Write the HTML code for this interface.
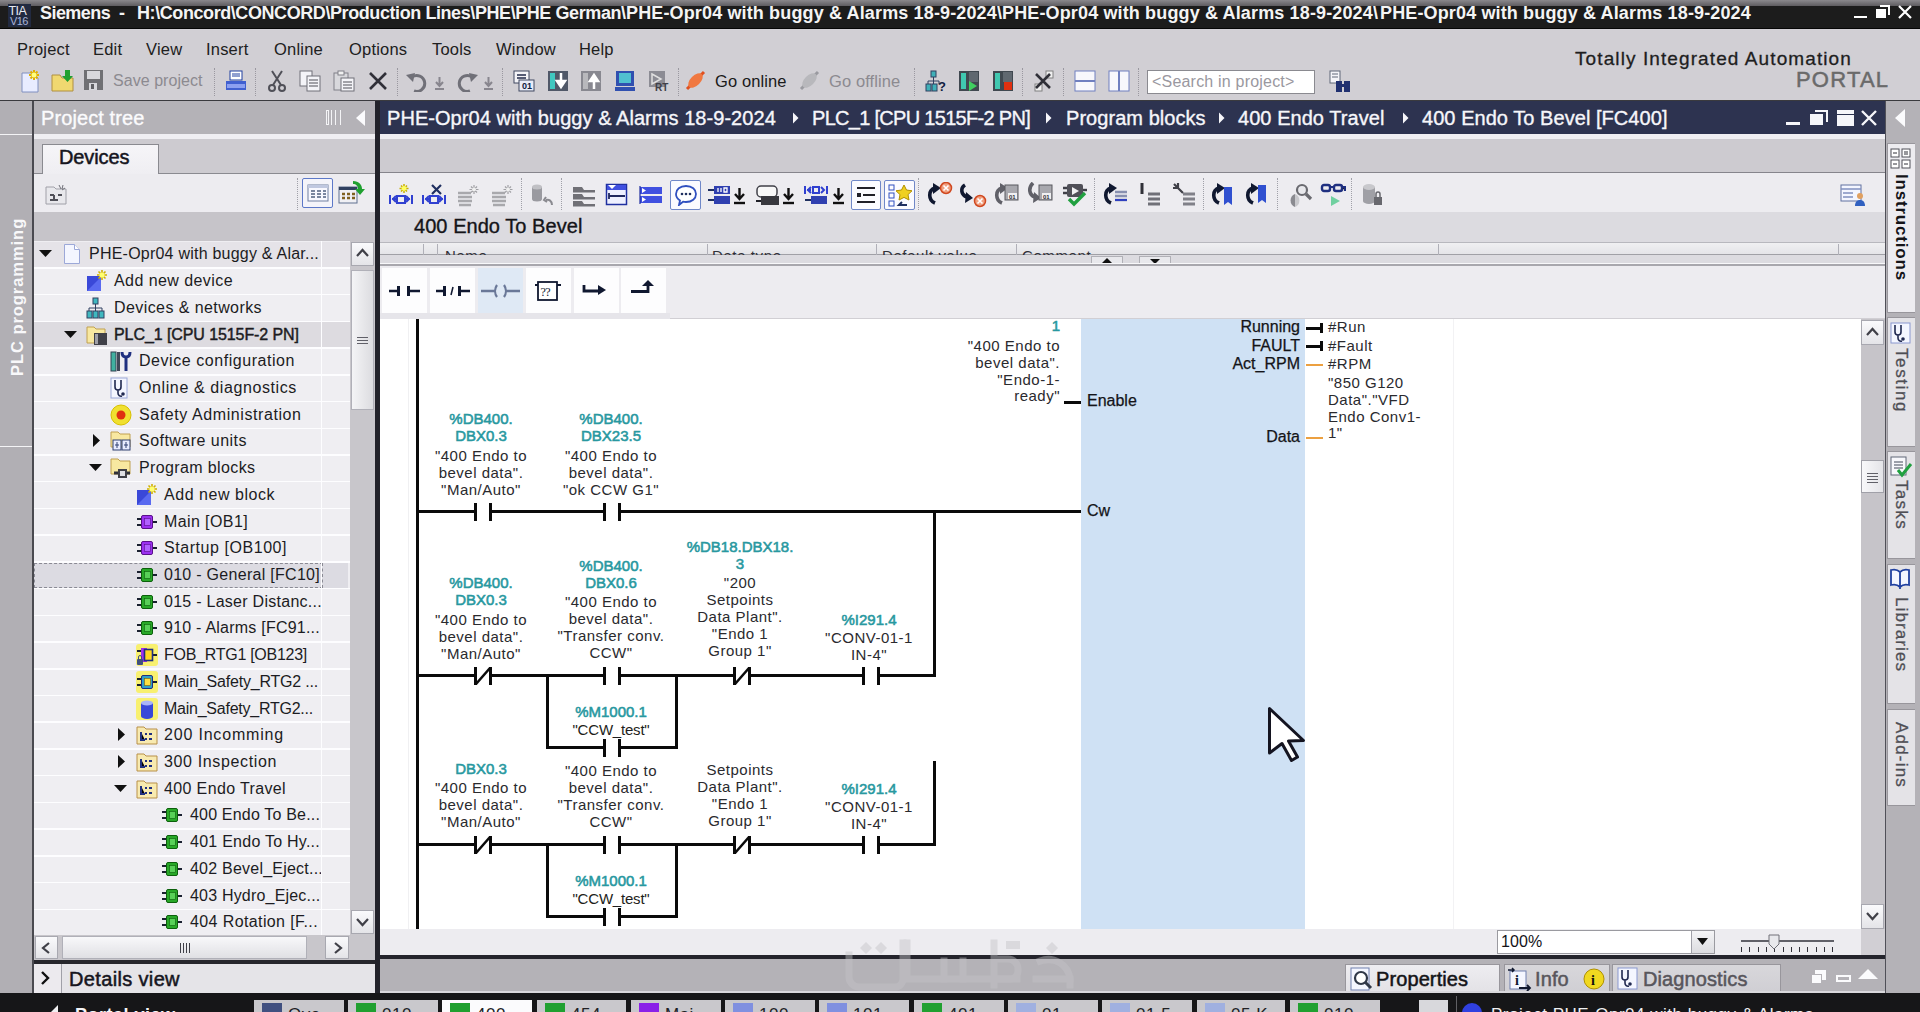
<!DOCTYPE html><html><head><meta charset='utf-8'><style>
*{margin:0;padding:0;box-sizing:border-box}
html,body{width:1920px;height:1012px;overflow:hidden;background:#d1cfd4;font-family:"Liberation Sans",sans-serif}
div,svg{position:absolute}
.t{white-space:pre;color:#1a1a1a}
</style></head><body>
<div style="left:0px;top:0px;width:1920px;height:6px;background:linear-gradient(#8a888c,#5e5c60)"></div>
<div style="left:0px;top:6px;width:1920px;height:22px;background:#1c1c1c"></div>
<div style="left:0px;top:28px;width:1920px;height:1px;background:#050505"></div>
<div style="left:8px;top:4px;width:23px;height:23px;background:#222a40"></div>
<div class="t" style="left:8.5px;top:4.5px;line-height:13px;font-size:12.5px;color:#e8eaf2;letter-spacing:-0.6px;">TIA</div>
<div class="t" style="left:10px;top:16.0px;line-height:11px;font-size:11px;color:#a8b4d8;letter-spacing:-0.6px;">V16</div>
<div class="t" style="left:40px;top:3.0px;line-height:20px;font-size:18px;color:#f4f4f4;font-weight:bold;letter-spacing:-0.55px">Siemens</div>
<div class="t" style="left:119px;top:3.0px;line-height:20px;font-size:18px;color:#f4f4f4;font-weight:bold;">-</div>
<div class="t" style="left:137px;top:3.0px;line-height:20px;font-size:18px;color:#f4f4f4;font-weight:bold;letter-spacing:-0.42px">H:\Concord\CONCORD\Production Lines\PHE\PHE German\</div>
<div class="t" style="left:626px;top:3.0px;line-height:20px;font-size:18px;color:#f4f4f4;font-weight:bold;letter-spacing:0.14px">PHE-Opr04 with buggy &amp; Alarms 18-9-2024\</div>
<div class="t" style="left:1002px;top:3.0px;line-height:20px;font-size:18px;color:#f4f4f4;font-weight:bold;letter-spacing:0.14px">PHE-Opr04 with buggy &amp; Alarms 18-9-2024\</div>
<div class="t" style="left:1380px;top:3.0px;line-height:20px;font-size:18px;color:#f4f4f4;font-weight:bold;letter-spacing:0.14px">PHE-Opr04 with buggy &amp; Alarms 18-9-2024</div>
<div style="left:1854px;top:16px;width:13px;height:2px;background:#fff"></div>
<div style="left:1880px;top:5px;width:10px;height:10px;border:2px solid #fff;border-left:none;border-bottom:none"></div>
<div style="left:1876px;top:9px;width:10px;height:9px;background:#fff"></div>
<svg style="left:1897px;top:4px;" width="16" height="16" viewBox="0 0 16 16"><path d="M2 2L14 14M14 2L2 14" stroke="#fff" stroke-width="2.2"/></svg>
<div class="t" style="left:17px;top:39.0px;line-height:20px;font-size:16.5px;color:#202020;letter-spacing:0.2px">Project</div>
<div class="t" style="left:93px;top:39.0px;line-height:20px;font-size:16.5px;color:#202020;letter-spacing:0.2px">Edit</div>
<div class="t" style="left:146px;top:39.0px;line-height:20px;font-size:16.5px;color:#202020;letter-spacing:0.2px">View</div>
<div class="t" style="left:206px;top:39.0px;line-height:20px;font-size:16.5px;color:#202020;letter-spacing:0.2px">Insert</div>
<div class="t" style="left:274px;top:39.0px;line-height:20px;font-size:16.5px;color:#202020;letter-spacing:0.2px">Online</div>
<div class="t" style="left:349px;top:39.0px;line-height:20px;font-size:16.5px;color:#202020;letter-spacing:0.2px">Options</div>
<div class="t" style="left:432px;top:39.0px;line-height:20px;font-size:16.5px;color:#202020;letter-spacing:0.2px">Tools</div>
<div class="t" style="left:496px;top:39.0px;line-height:20px;font-size:16.5px;color:#202020;letter-spacing:0.2px">Window</div>
<div class="t" style="left:579px;top:39.0px;line-height:20px;font-size:16.5px;color:#202020;letter-spacing:0.2px">Help</div>
<div class="t" style="left:1575px;top:49.0px;line-height:20px;font-size:19px;color:#1e1e1e;-webkit-text-stroke:0.3px #1e1e1e;letter-spacing:1.1px">Totally Integrated Automation</div>
<div class="t" style="left:1796px;top:70.0px;line-height:20px;font-size:22px;color:#6a6a6a;-webkit-text-stroke:0.5px #6a6a6a;letter-spacing:1.2px">PORTAL</div>
<div style="left:0px;top:100px;width:1920px;height:1px;background:#3a3a3e"></div>
<svg style="left:20px;top:69px;" width="22" height="24" viewBox="0 0 22 24"><path d="M2 4h11l5 5v14H2z" fill="#e8ecff" stroke="#8090c0"/><g stroke="#e0b000" stroke-width="2"><path d="M14 1v10M9 6h10M10.5 2.5l7 7M17.5 2.5l-7 7"/></g><circle cx="14" cy="6" r="2.5" fill="#ffff80"/></svg>
<svg style="left:51px;top:69px;" width="24" height="24" viewBox="0 0 24 24"><path d="M1 6h8l2 3h11v13H1z" fill="#f0d870" stroke="#b09040"/><path d="M14 1h5v6h3l-5.5 6-5.5-6h3z" fill="#20a030"/></svg>
<svg style="left:83px;top:69px;" width="21" height="22" viewBox="0 0 21 22"><rect x="1" y="1" width="19" height="20" fill="#707074"/><rect x="4" y="2" width="13" height="8" fill="#d8d8dc"/><rect x="6" y="14" width="8" height="7" fill="#d8d8dc"/><rect x="8" y="15" width="3" height="5" fill="#606064"/></svg>
<div class="t" style="left:113px;top:71.0px;line-height:20px;font-size:16px;color:#8c8a90;letter-spacing:0.05px">Save project</div>
<div style="left:214px;top:68px;width:1px;height:28px;border-left:1px dotted #9a98a0"></div>
<svg style="left:225px;top:70px;" width="22" height="22" viewBox="0 0 22 22"><rect x="5" y="1" width="12" height="9" fill="#fff" stroke="#2040a0"/><path d="M7 4h8M7 6h8" stroke="#2040a0"/><path d="M1 11h20v9H1z" fill="#4060d0"/><rect x="2" y="14" width="18" height="4" fill="#8ca0f0"/></svg>
<div style="left:255px;top:68px;width:1px;height:28px;border-left:1px dotted #9a98a0"></div>
<svg style="left:268px;top:70px;" width="18" height="22" viewBox="0 0 18 22"><path d="M4 1l9 14M14 1L5 15" stroke="#505058" stroke-width="2"/><circle cx="4" cy="18" r="3" fill="none" stroke="#505058" stroke-width="2"/><circle cx="14" cy="18" r="3" fill="none" stroke="#505058" stroke-width="2"/></svg>
<svg style="left:299px;top:70px;" width="22" height="22" viewBox="0 0 22 22"><rect x="1" y="1" width="12" height="15" fill="#f4f4f8" stroke="#707078"/><rect x="8" y="6" width="13" height="15" fill="#f4f4f8" stroke="#707078"/><path d="M10 10h9M10 13h9M10 16h9" stroke="#505058"/></svg>
<svg style="left:333px;top:70px;" width="22" height="22" viewBox="0 0 22 22"><rect x="1" y="3" width="14" height="17" fill="#d8d8dc" stroke="#808088"/><rect x="5" y="1" width="6" height="4" fill="#f0f0f0" stroke="#808088"/><rect x="8" y="8" width="13" height="13" fill="#f4f4f8" stroke="#707078"/><path d="M10 12h9M10 15h9M10 18h9" stroke="#505058"/></svg>
<svg style="left:368px;top:72px;" width="20" height="18" viewBox="0 0 20 18"><path d="M2 1l16 16M18 1L2 17" stroke="#303038" stroke-width="2.6"/></svg>
<div style="left:397px;top:68px;width:1px;height:28px;border-left:1px dotted #9a98a0"></div>
<svg style="left:405px;top:71px;" width="24" height="21" viewBox="0 0 24 21"><path d="M7 6a8 8 0 1 1 2 14" fill="none" stroke="#707078" stroke-width="3"/><path d="M1 4l9-2-2 9z" fill="#707078"/></svg>
<svg style="left:434px;top:76px;" width="11" height="15" viewBox="0 0 11 15"><path d="M5.5 1v8M2 6l3.5 4 3.5-4" stroke="#88868e" stroke-width="2" fill="none"/><path d="M1 13h9" stroke="#88868e" stroke-width="2"/></svg>
<svg style="left:455px;top:71px;" width="24" height="21" viewBox="0 0 24 21"><path d="M17 6a8 8 0 1 0 -2 14" fill="none" stroke="#707078" stroke-width="3"/><path d="M23 4l-9-2 2 9z" fill="#707078"/></svg>
<svg style="left:483px;top:76px;" width="11" height="15" viewBox="0 0 11 15"><path d="M5.5 1v8M2 6l3.5 4 3.5-4" stroke="#88868e" stroke-width="2" fill="none"/><path d="M1 13h9" stroke="#88868e" stroke-width="2"/></svg>
<div style="left:502px;top:68px;width:1px;height:28px;border-left:1px dotted #9a98a0"></div>
<svg style="left:513px;top:70px;" width="22" height="22" viewBox="0 0 22 22"><rect x="1" y="1" width="15" height="12" fill="#f4f4f8" stroke="#404860"/><path d="M4 5h9M4 8h9" stroke="#202848" stroke-width="1.5"/><rect x="6" y="10" width="15" height="11" fill="#e8ecf8" stroke="#404860"/><text x="9" y="19" font-size="9" font-weight="bold" fill="#102040" font-family="Liberation Sans">01</text></svg>
<svg style="left:547px;top:70px;" width="22" height="22" viewBox="0 0 22 22"><rect x="1" y="1" width="20" height="20" fill="#505868"/><rect x="3" y="3" width="5" height="16" fill="#40c8c0"/><path d="M14 3v10M10 11l4 6 4-6z" stroke="#fff" stroke-width="2.5" fill="#fff"/></svg>
<svg style="left:580px;top:70px;" width="22" height="22" viewBox="0 0 22 22"><rect x="1" y="1" width="20" height="20" fill="#888890"/><rect x="3" y="3" width="5" height="16" fill="#b8b8bc"/><path d="M14 19V9M10 11l4-6 4 6z" stroke="#fff" stroke-width="2.5" fill="#fff"/></svg>
<svg style="left:614px;top:70px;" width="22" height="22" viewBox="0 0 22 22"><rect x="2" y="1" width="18" height="15" fill="#3050b0"/><rect x="5" y="3" width="12" height="10" fill="#50c0d0"/><rect x="1" y="17" width="20" height="4" fill="#3050b0"/></svg>
<svg style="left:648px;top:70px;" width="22" height="22" viewBox="0 0 22 22"><rect x="1" y="1" width="16" height="16" fill="#8c8c94"/><path d="M4 4l9 5-9 5z" fill="none" stroke="#e0e0e0" stroke-width="1.5"/><text x="7" y="21" font-size="10" font-weight="bold" fill="#404048" font-family="Liberation Sans">RT</text></svg>
<div style="left:678px;top:68px;width:1px;height:28px;border-left:1px dotted #9a98a0"></div>
<svg style="left:684px;top:69px;" width="23" height="23" viewBox="0 0 23 23"><path d="M3 20l5-5M15 8l5-5" stroke="#e05020" stroke-width="3"/><ellipse cx="11.5" cy="11.5" rx="9" ry="5" transform="rotate(-45 11.5 11.5)" fill="#f07840"/></svg>
<div class="t" style="left:715px;top:71.0px;line-height:20px;font-size:16.5px;color:#1a1a1a;letter-spacing:0.1px">Go online</div>
<svg style="left:798px;top:69px;" width="23" height="23" viewBox="0 0 23 23"><path d="M3 20l5-5M15 8l5-5" stroke="#9a9aa0" stroke-width="3"/><ellipse cx="11.5" cy="11.5" rx="9" ry="5" transform="rotate(-45 11.5 11.5)" fill="#b8b8bc"/></svg>
<div class="t" style="left:829px;top:71.0px;line-height:20px;font-size:16.5px;color:#8c8a90;letter-spacing:0.1px">Go offline</div>
<div style="left:914px;top:68px;width:1px;height:28px;border-left:1px dotted #9a98a0"></div>
<svg style="left:925px;top:70px;" width="22" height="22" viewBox="0 0 22 22"><rect x="6" y="1" width="5" height="6" fill="#40b0b8" stroke="#304060"/><path d="M8.5 7v4M3 11h11M3 11v3M8.5 11v3M14 11v3" stroke="#304060"/><rect x="1" y="14" width="5" height="7" fill="#40b0b8" stroke="#304060"/><rect x="7" y="14" width="5" height="7" fill="#40b0b8" stroke="#304060"/><text x="13" y="21" font-size="13" font-weight="bold" fill="#102040" font-family="Liberation Sans">?</text></svg>
<svg style="left:958px;top:70px;" width="22" height="22" viewBox="0 0 22 22"><rect x="1" y="1" width="20" height="20" fill="#404850"/><rect x="3" y="3" width="5" height="16" fill="#40c8b0"/><rect x="11" y="2" width="9" height="10" fill="#606870"/><path d="M11 11l8 5-8 5z" fill="#40d060"/></svg>
<svg style="left:992px;top:70px;" width="22" height="22" viewBox="0 0 22 22"><rect x="1" y="1" width="20" height="20" fill="#404850"/><rect x="3" y="3" width="5" height="16" fill="#40c8b0"/><rect x="11" y="2" width="9" height="10" fill="#606870"/><rect x="12" y="12" width="8" height="8" fill="#e03010"/></svg>
<div style="left:1022px;top:68px;width:1px;height:28px;border-left:1px dotted #9a98a0"></div>
<svg style="left:1033px;top:70px;" width="22" height="22" viewBox="0 0 22 22"><rect x="13" y="1" width="7" height="7" fill="#f0f0f0" stroke="#808080"/><rect x="2" y="14" width="7" height="7" fill="#f0f0f0" stroke="#808080"/><path d="M3 4l14 14M17 4L3 18" stroke="#303038" stroke-width="2.6"/></svg>
<div style="left:1063px;top:68px;width:1px;height:28px;border-left:1px dotted #9a98a0"></div>
<svg style="left:1074px;top:70px;" width="22" height="22" viewBox="0 0 22 22"><rect x="1" y="1" width="20" height="20" fill="#f8f8fc" stroke="#7080c0"/><path d="M1 11h20" stroke="#7080c0" stroke-width="2"/></svg>
<svg style="left:1108px;top:70px;" width="22" height="22" viewBox="0 0 22 22"><rect x="1" y="1" width="20" height="20" fill="#f8f8fc" stroke="#7080c0"/><path d="M11 1v20" stroke="#7080c0" stroke-width="2"/></svg>
<div style="left:1138px;top:68px;width:1px;height:28px;border-left:1px dotted #9a98a0"></div>
<div style="left:1147px;top:70px;width:168px;height:24px;background:#fff;border:1px solid #8a8a90"></div>
<div class="t" style="left:1152px;top:72.0px;line-height:20px;font-size:16px;color:#9a98a0;letter-spacing:0.2px">&lt;Search in project&gt;</div>
<svg style="left:1328px;top:70px;" width="24" height="24" viewBox="0 0 24 24"><rect x="2" y="1" width="10" height="12" fill="#f4f4f8" stroke="#606878"/><path d="M4 4h6M4 7h6" stroke="#606878"/><rect x="8" y="11" width="6" height="11" fill="#203070"/><rect x="16" y="11" width="6" height="11" fill="#203070"/><rect x="12" y="14" width="6" height="3" fill="#203070"/></svg>
<div style="left:0px;top:101px;width:32px;height:893px;background:#b1afb4"></div>
<div style="left:32px;top:101px;width:2px;height:893px;background:#4a4a50"></div>
<div style="left:0px;top:134px;width:32px;height:1px;background:#f4f4f6"></div>
<div style="left:0px;top:446px;width:32px;height:1px;background:#f4f4f6"></div>
<div class="t" style="left:-62px;top:287px;width:158px;height:20px;line-height:20px;font-size:16.5px;font-weight:bold;color:#f8f8fa;letter-spacing:0.95px;transform:rotate(-90deg);text-align:center">PLC programming</div>
<div style="left:34px;top:101px;width:341px;height:33px;background:#b4b2b7"></div>
<div class="t" style="left:41px;top:108.0px;line-height:20px;font-size:20px;color:#fbfbfd;-webkit-text-stroke:0.35px #fbfbfd;letter-spacing:0.1px">Project tree</div>
<div style="left:326px;top:110px;width:3px;height:15px;border:1px solid #f4f4f6"></div>
<div style="left:331px;top:110px;width:10px;height:15px;border-left:1px solid #f4f4f6;border-right:1px solid #f4f4f6"></div>
<div style="left:335px;top:110px;width:2px;height:15px;border-left:1px solid #f4f4f6"></div>
<svg style="left:354px;top:109px;" width="12" height="18" viewBox="0 0 12 18"><path d="M11 1L2 9l9 8z" fill="#fbfbfd"/></svg>
<div style="left:34px;top:134px;width:341px;height:5px;background:#efeef2"></div>
<div style="left:34px;top:139px;width:341px;height:34px;background:#cdcbd0"></div>
<div style="left:42px;top:144px;width:117px;height:30px;background:linear-gradient(#f6f5f8,#efeef2);border:1px solid #8a8a90;border-bottom:none"></div>
<div class="t" style="left:59px;top:147.0px;line-height:20px;font-size:20px;color:#151520;-webkit-text-stroke:0.5px #151520;letter-spacing:-0.1px">Devices</div>
<div style="left:34px;top:173px;width:8px;height:1px;background:#8a8a90"></div>
<div style="left:159px;top:173px;width:216px;height:1px;background:#8a8a90"></div>
<div style="left:34px;top:174px;width:341px;height:38px;background:#edecf0"></div>
<svg style="left:44px;top:183px;" width="24" height="22" viewBox="0 0 24 22"><path d="M2 4h8l2 2h10v15H2z" fill="#e8e8ec" stroke="#a0a0a8"/><path d="M6 12h4M6 17h8M10 12v5M14 12h4" stroke="#505058" stroke-width="2"/><path d="M15 2l2 4M19 2l-1 4M21 5l-3 2" stroke="#707078"/></svg>
<div style="left:297px;top:178px;width:1px;height:32px;border-left:1px dotted #a0a0a8"></div>
<div style="left:302px;top:178px;width:31px;height:30px;background:#f4f4fa;border:1px solid #5c78c8;border-radius:2px"></div>
<svg style="left:307px;top:184px;" width="22" height="18" viewBox="0 0 22 18"><rect x="1" y="1" width="20" height="16" fill="#f8f8ff" stroke="#7080a0"/><rect x="1" y="1" width="20" height="3" fill="#c0c8e0"/><path d="M4 7h4M10 7h4M16 7h3M4 10h4M10 10h4M16 10h3M4 13h4M10 13h4M16 13h3" stroke="#506080" stroke-width="1.5"/></svg>
<svg style="left:337px;top:180px;" width="28" height="26" viewBox="0 0 28 26"><rect x="2" y="7" width="18" height="16" fill="#f0f0f4" stroke="#607090"/><rect x="2" y="7" width="18" height="3" fill="#304060"/><path d="M5 14h3M10 14h3M15 14h3M5 18h3M10 18h3M15 18h3" stroke="#806020" stroke-width="2.5"/><path d="M16 1c6 0 9 4 9 8h3l-5 6-5-6h3c0-3-2-5-5-5z" fill="#20a030"/></svg>
<div style="left:34px;top:212px;width:341px;height:29px;background:#c6c4c9"></div>
<div style="left:34px;top:241px;width:316px;height:694px;background:#efeef2"></div>
<div style="left:34px;top:242.0px;width:316px;height:25.72px;background:#e5e3e8"></div>
<div style="left:34px;top:267.22px;width:316px;height:1.5px;background:#fdfdff"></div>
<svg style="left:39px;top:249px;" width="14" height="9" viewBox="0 0 14 9"><path d="M0 1h13L6.5 8z" fill="#101010"/></svg>
<svg style="left:63px;top:243px;" width="18" height="22" viewBox="0 0 18 22"><path d="M1.5 1.5h10l5 5v14h-15z" fill="#f4f6ff" stroke="#9ca8d8"/><path d="M11.5 1.5v5h5" fill="#fff" stroke="#9ca8d8"/></svg>
<div class="t" style="left:89px;top:244.36px;line-height:20px;font-size:16px;color:#1c1c22;letter-spacing:0.227px">PHE-Opr04 with buggy &amp; Alar...</div>
<div style="left:34px;top:293.94000000000005px;width:316px;height:1.5px;background:#fdfdff"></div>
<svg style="left:86px;top:270px;" width="22" height="22" viewBox="0 0 22 22"><path d="M1 6h14v15H1z" fill="#3a48d8"/><path d="M1 21L15 7v14z" fill="#5a6af0"/><g stroke="#d0b000" stroke-width="1.6"><path d="M16 0v10M11 5h10M12.5 1.5l7 7M19.5 1.5l-7 7"/></g><circle cx="16" cy="5" r="2.6" fill="#ffff70"/></svg>
<div class="t" style="left:114px;top:271.08000000000004px;line-height:20px;font-size:16px;color:#1c1c22;letter-spacing:0.429px">Add new device</div>
<div style="left:34px;top:320.65999999999997px;width:316px;height:1.5px;background:#fdfdff"></div>
<svg style="left:86px;top:297px;" width="20" height="22" viewBox="0 0 20 22"><rect x="7" y="1" width="5" height="6" fill="#40b8c0" stroke="#304060"/><path d="M9.5 7v4M3 11h13M3 11v3M9.5 11v3M16 11v3" stroke="#304060"/><rect x="1" y="14" width="5" height="7" fill="#40b8c0" stroke="#304060"/><rect x="7" y="14" width="5" height="7" fill="#40b8c0" stroke="#304060"/><rect x="13" y="14" width="5" height="7" fill="#40b8c0" stroke="#304060"/></svg>
<div class="t" style="left:114px;top:297.8px;line-height:20px;font-size:16px;color:#1c1c22;letter-spacing:0.417px">Devices &amp; networks</div>
<div style="left:34px;top:322.15999999999997px;width:316px;height:25.72px;background:#dddbe0"></div>
<div style="left:34px;top:347.38px;width:316px;height:1.5px;background:#fdfdff"></div>
<svg style="left:64px;top:330px;" width="14" height="9" viewBox="0 0 14 9"><path d="M0 1h13L6.5 8z" fill="#101010"/></svg>
<svg style="left:86px;top:324px;" width="22" height="22" viewBox="0 0 22 22"><path d="M1 3h7l2 2h9v14H1z" fill="#f8e8a0" stroke="#c0a050"/><rect x="8" y="9" width="13" height="12" fill="#404048"/><rect x="9" y="10" width="3" height="10" fill="#a0a0a8"/></svg>
<div class="t" style="left:114px;top:324.52px;line-height:20px;font-size:16px;color:#1c1c22;letter-spacing:-0.082px;-webkit-text-stroke:0.45px #1c1c22">PLC_1 [CPU 1515F-2 PN]</div>
<div style="left:34px;top:374.1px;width:316px;height:1.5px;background:#fdfdff"></div>
<svg style="left:110px;top:350px;" width="22" height="22" viewBox="0 0 22 22"><rect x="1" y="2" width="5" height="19" fill="#40b0a0" stroke="#304050"/><rect x="7" y="2" width="3" height="19" fill="#404858"/><path d="M12 2c0 4 2 5 4 5s4-1 4-5M16 7v14" stroke="#203080" stroke-width="3" fill="none"/></svg>
<div class="t" style="left:139px;top:351.24px;line-height:20px;font-size:16px;color:#1c1c22;letter-spacing:0.550px">Device configuration</div>
<div style="left:34px;top:400.82000000000005px;width:316px;height:1.5px;background:#fdfdff"></div>
<svg style="left:110px;top:377px;" width="18" height="22" viewBox="0 0 18 22"><rect x="1" y="1" width="16" height="20" fill="#f4f6ff" stroke="#9ca8d8"/><path d="M5 3v7a3 3 0 0 0 6 0V3M8 13v3a3 3 0 0 0 4 3" stroke="#202850" stroke-width="1.6" fill="none"/><circle cx="13" cy="17" r="1.8" fill="#202850"/></svg>
<div class="t" style="left:139px;top:377.96000000000004px;line-height:20px;font-size:16px;color:#1c1c22;letter-spacing:0.605px">Online &amp; diagnostics</div>
<div style="left:34px;top:427.53999999999996px;width:316px;height:1.5px;background:#fdfdff"></div>
<svg style="left:110px;top:404px;" width="22" height="22" viewBox="0 0 22 22"><circle cx="11" cy="11" r="10" fill="#f0e030" stroke="#d8c000"/><circle cx="11" cy="11" r="4.5" fill="#e03010"/></svg>
<div class="t" style="left:139px;top:404.68px;line-height:20px;font-size:16px;color:#1c1c22;letter-spacing:0.581px">Safety Administration</div>
<div style="left:34px;top:454.26px;width:316px;height:1.5px;background:#fdfdff"></div>
<svg style="left:92px;top:434px;" width="9" height="14" viewBox="0 0 9 14"><path d="M1 0v13L8 6.5z" fill="#101010"/></svg>
<svg style="left:110px;top:430px;" width="24" height="22" viewBox="0 0 24 22"><path d="M1 2h7l2 2h10v13H1z" fill="#f8e8a0" stroke="#c0a050"/><rect x="3" y="10" width="8" height="10" fill="#e8ecff" stroke="#304070"/><rect x="12" y="10" width="8" height="10" fill="#e8ecff" stroke="#304070"/><path d="M7 12v6M5 15h4M16 12v6M14 15h4" stroke="#304070"/></svg>
<div class="t" style="left:139px;top:431.4px;line-height:20px;font-size:16px;color:#1c1c22;letter-spacing:0.471px">Software units</div>
<div style="left:34px;top:480.98px;width:316px;height:1.5px;background:#fdfdff"></div>
<svg style="left:89px;top:463px;" width="14" height="9" viewBox="0 0 14 9"><path d="M0 1h13L6.5 8z" fill="#101010"/></svg>
<svg style="left:110px;top:457px;" width="24" height="22" viewBox="0 0 24 22"><path d="M1 2h7l2 2h10v13H1z" fill="#f8e8a0" stroke="#c0a050"/><path d="M4 16h16" stroke="#303038" stroke-width="3"/><rect x="8" y="12" width="9" height="9" fill="#404048"/><rect x="10" y="14" width="5" height="5" fill="#e0e0e4"/></svg>
<div class="t" style="left:139px;top:458.12px;line-height:20px;font-size:16px;color:#1c1c22;letter-spacing:0.379px">Program blocks</div>
<div style="left:34px;top:507.70000000000005px;width:316px;height:1.5px;background:#fdfdff"></div>
<svg style="left:136px;top:484px;" width="22" height="22" viewBox="0 0 22 22"><path d="M1 6h14v15H1z" fill="#3a48d8"/><path d="M1 21L15 7v14z" fill="#5a6af0"/><g stroke="#d0b000" stroke-width="1.6"><path d="M16 0v10M11 5h10M12.5 1.5l7 7M19.5 1.5l-7 7"/></g><circle cx="16" cy="5" r="2.6" fill="#ffff70"/></svg>
<div class="t" style="left:164px;top:484.84000000000003px;line-height:20px;font-size:16px;color:#1c1c22;letter-spacing:0.531px">Add new block</div>
<div style="left:34px;top:534.42px;width:316px;height:1.5px;background:#fdfdff"></div>
<svg style="left:136px;top:511px;" width="22" height="22" viewBox="0 0 22 22"><path d="M1 8h5M1 14h5M16 11h5" stroke="#1a2030" stroke-width="2"/><rect x="5.5" y="4.5" width="11" height="13" rx="1.5" fill="#9a30f0" stroke="#5a108a"/><rect x="8.5" y="7.5" width="6" height="7" fill="#b060ff" stroke="#5a108a" stroke-width="0.6"/></svg>
<div class="t" style="left:164px;top:511.55999999999995px;line-height:20px;font-size:16px;color:#1c1c22;letter-spacing:0.400px">Main [OB1]</div>
<div style="left:34px;top:561.14px;width:316px;height:1.5px;background:#fdfdff"></div>
<svg style="left:136px;top:537px;" width="22" height="22" viewBox="0 0 22 22"><path d="M1 8h5M1 14h5M16 11h5" stroke="#1a2030" stroke-width="2"/><rect x="5.5" y="4.5" width="11" height="13" rx="1.5" fill="#9a30f0" stroke="#5a108a"/><rect x="8.5" y="7.5" width="6" height="7" fill="#b060ff" stroke="#5a108a" stroke-width="0.6"/></svg>
<div class="t" style="left:164px;top:538.28px;line-height:20px;font-size:16px;color:#1c1c22;letter-spacing:0.553px">Startup [OB100]</div>
<div style="left:34px;top:562.64px;width:314px;height:25.72px;background:#dcdbe2"></div>
<div style="left:34px;top:562.64px;width:289px;height:25.72px;border:1px dashed #8a8a94"></div>
<div style="left:34px;top:587.86px;width:316px;height:1.5px;background:#fdfdff"></div>
<svg style="left:136px;top:564px;" width="22" height="22" viewBox="0 0 22 22"><path d="M1 8h5M1 14h5M16 11h5" stroke="#1a2030" stroke-width="2"/><rect x="5.5" y="4.5" width="11" height="13" rx="1.5" fill="#28a828" stroke="#0c600c"/><rect x="8.5" y="7.5" width="6" height="7" fill="#58d058" stroke="#0c600c" stroke-width="0.6"/></svg>
<div class="t" style="left:164px;top:565.0px;line-height:20px;font-size:16px;color:#1c1c22;letter-spacing:0.285px">010 - General [FC10]</div>
<div style="left:34px;top:614.58px;width:316px;height:1.5px;background:#fdfdff"></div>
<svg style="left:136px;top:591px;" width="22" height="22" viewBox="0 0 22 22"><path d="M1 8h5M1 14h5M16 11h5" stroke="#1a2030" stroke-width="2"/><rect x="5.5" y="4.5" width="11" height="13" rx="1.5" fill="#28a828" stroke="#0c600c"/><rect x="8.5" y="7.5" width="6" height="7" fill="#58d058" stroke="#0c600c" stroke-width="0.6"/></svg>
<div class="t" style="left:164px;top:591.72px;line-height:20px;font-size:16px;color:#1c1c22;letter-spacing:0.268px">015 - Laser Distanc...</div>
<div style="left:34px;top:641.3px;width:316px;height:1.5px;background:#fdfdff"></div>
<svg style="left:136px;top:617px;" width="22" height="22" viewBox="0 0 22 22"><path d="M1 8h5M1 14h5M16 11h5" stroke="#1a2030" stroke-width="2"/><rect x="5.5" y="4.5" width="11" height="13" rx="1.5" fill="#28a828" stroke="#0c600c"/><rect x="8.5" y="7.5" width="6" height="7" fill="#58d058" stroke="#0c600c" stroke-width="0.6"/></svg>
<div class="t" style="left:164px;top:618.4399999999999px;line-height:20px;font-size:16px;color:#1c1c22;letter-spacing:0.229px">910 - Alarms [FC91...</div>
<div style="left:34px;top:668.02px;width:316px;height:1.5px;background:#fdfdff"></div>
<svg style="left:136px;top:644px;" width="22" height="22" viewBox="0 0 22 22"><rect x="0" y="0" width="22" height="22" rx="3" fill="#f8f070"/><path d="M1 7h5M16 11h5" stroke="#1a2030" stroke-width="2"/><path d="M5 4h6v14H7a2 2 0 0 1-2-2z" fill="#a030f0"/><rect x="8.5" y="5.5" width="8" height="11" fill="#ffd820" stroke="#203080" stroke-width="1.6"/><rect x="1" y="15" width="6" height="6" rx="1" fill="#405080"/><path d="M2.5 15v-2a1.5 1.5 0 0 1 3 0v2" stroke="#405080" fill="none"/></svg>
<div class="t" style="left:164px;top:645.16px;line-height:20px;font-size:16px;color:#1c1c22;letter-spacing:-0.269px">FOB_RTG1 [OB123]</div>
<div style="left:34px;top:694.74px;width:316px;height:1.5px;background:#fdfdff"></div>
<svg style="left:136px;top:671px;" width="22" height="22" viewBox="0 0 22 22"><rect x="0" y="0" width="22" height="22" rx="3" fill="#f8f070"/><path d="M1 8h5M1 14h5M16 11h5" stroke="#1a2030" stroke-width="2"/><rect x="5.5" y="4.5" width="11" height="13" rx="1.5" fill="#30a0c8" stroke="#203080"/><rect x="8.5" y="7.5" width="6" height="7" fill="#ffe040" stroke="#806000" stroke-width="0.6"/></svg>
<div class="t" style="left:164px;top:671.88px;line-height:20px;font-size:16px;color:#1c1c22;letter-spacing:-0.200px">Main_Safety_RTG2 ...</div>
<div style="left:34px;top:721.46px;width:316px;height:1.5px;background:#fdfdff"></div>
<svg style="left:136px;top:698px;" width="22" height="22" viewBox="0 0 22 22"><rect x="0" y="0" width="22" height="22" rx="3" fill="#f8f070"/><path d="M5 5v13a6 3 0 0 0 12 0V5" fill="#3848d8"/><ellipse cx="11" cy="5" rx="6" ry="2.6" fill="#a8b4f8"/></svg>
<div class="t" style="left:164px;top:698.6px;line-height:20px;font-size:16px;color:#1c1c22;letter-spacing:-0.242px">Main_Safety_RTG2...</div>
<div style="left:34px;top:748.1800000000001px;width:316px;height:1.5px;background:#fdfdff"></div>
<svg style="left:117px;top:728px;" width="9" height="14" viewBox="0 0 9 14"><path d="M1 0v13L8 6.5z" fill="#101010"/></svg>
<svg style="left:136px;top:724px;" width="22" height="22" viewBox="0 0 22 22"><path d="M1 3h7l2 2h11v15H1z" fill="#f8eab0" stroke="#b89048"/><path d="M5 8v8h4M9 10h2M13 10h3M13 15h3M9 15h2" stroke="#203080" stroke-width="2"/></svg>
<div class="t" style="left:164px;top:725.32px;line-height:20px;font-size:16px;color:#1c1c22;letter-spacing:0.815px">200 Incomming</div>
<div style="left:34px;top:774.9px;width:316px;height:1.5px;background:#fdfdff"></div>
<svg style="left:117px;top:755px;" width="9" height="14" viewBox="0 0 9 14"><path d="M1 0v13L8 6.5z" fill="#101010"/></svg>
<svg style="left:136px;top:751px;" width="22" height="22" viewBox="0 0 22 22"><path d="M1 3h7l2 2h11v15H1z" fill="#f8eab0" stroke="#b89048"/><path d="M5 8v8h4M9 10h2M13 10h3M13 15h3M9 15h2" stroke="#203080" stroke-width="2"/></svg>
<div class="t" style="left:164px;top:752.04px;line-height:20px;font-size:16px;color:#1c1c22;letter-spacing:0.636px">300 Inspection</div>
<div style="left:34px;top:801.62px;width:316px;height:1.5px;background:#fdfdff"></div>
<svg style="left:114px;top:784px;" width="14" height="9" viewBox="0 0 14 9"><path d="M0 1h13L6.5 8z" fill="#101010"/></svg>
<svg style="left:136px;top:778px;" width="22" height="22" viewBox="0 0 22 22"><path d="M1 3h7l2 2h11v15H1z" fill="#f8eab0" stroke="#b89048"/><path d="M5 8v8h4M9 10h2M13 10h3M13 15h3M9 15h2" stroke="#203080" stroke-width="2"/></svg>
<div class="t" style="left:164px;top:778.76px;line-height:20px;font-size:16px;color:#1c1c22;letter-spacing:0.367px">400 Endo Travel</div>
<div style="left:34px;top:828.34px;width:316px;height:1.5px;background:#fdfdff"></div>
<svg style="left:161px;top:804px;" width="22" height="22" viewBox="0 0 22 22"><path d="M1 8h5M1 14h5M16 11h5" stroke="#1a2030" stroke-width="2"/><rect x="5.5" y="4.5" width="11" height="13" rx="1.5" fill="#28a828" stroke="#0c600c"/><rect x="8.5" y="7.5" width="6" height="7" fill="#58d058" stroke="#0c600c" stroke-width="0.6"/></svg>
<div class="t" style="left:190px;top:805.48px;line-height:20px;font-size:16px;color:#1c1c22;letter-spacing:0.182px">400 Endo To Be...</div>
<div style="left:34px;top:855.06px;width:316px;height:1.5px;background:#fdfdff"></div>
<svg style="left:161px;top:831px;" width="22" height="22" viewBox="0 0 22 22"><path d="M1 8h5M1 14h5M16 11h5" stroke="#1a2030" stroke-width="2"/><rect x="5.5" y="4.5" width="11" height="13" rx="1.5" fill="#28a828" stroke="#0c600c"/><rect x="8.5" y="7.5" width="6" height="7" fill="#58d058" stroke="#0c600c" stroke-width="0.6"/></svg>
<div class="t" style="left:190px;top:832.1999999999999px;line-height:20px;font-size:16px;color:#1c1c22;letter-spacing:0.253px">401 Endo To Hy...</div>
<div style="left:34px;top:881.78px;width:316px;height:1.5px;background:#fdfdff"></div>
<svg style="left:161px;top:858px;" width="22" height="22" viewBox="0 0 22 22"><path d="M1 8h5M1 14h5M16 11h5" stroke="#1a2030" stroke-width="2"/><rect x="5.5" y="4.5" width="11" height="13" rx="1.5" fill="#28a828" stroke="#0c600c"/><rect x="8.5" y="7.5" width="6" height="7" fill="#58d058" stroke="#0c600c" stroke-width="0.6"/></svg>
<div class="t" style="left:190px;top:858.92px;line-height:20px;font-size:16px;color:#1c1c22;letter-spacing:0.222px">402 Bevel_Eject...</div>
<div style="left:34px;top:908.5px;width:316px;height:1.5px;background:#fdfdff"></div>
<svg style="left:161px;top:885px;" width="22" height="22" viewBox="0 0 22 22"><path d="M1 8h5M1 14h5M16 11h5" stroke="#1a2030" stroke-width="2"/><rect x="5.5" y="4.5" width="11" height="13" rx="1.5" fill="#28a828" stroke="#0c600c"/><rect x="8.5" y="7.5" width="6" height="7" fill="#58d058" stroke="#0c600c" stroke-width="0.6"/></svg>
<div class="t" style="left:190px;top:885.64px;line-height:20px;font-size:16px;color:#1c1c22;letter-spacing:0.194px">403 Hydro_Ejec...</div>
<div style="left:34px;top:935.22px;width:316px;height:1.5px;background:#fdfdff"></div>
<svg style="left:161px;top:911px;" width="22" height="22" viewBox="0 0 22 22"><path d="M1 8h5M1 14h5M16 11h5" stroke="#1a2030" stroke-width="2"/><rect x="5.5" y="4.5" width="11" height="13" rx="1.5" fill="#28a828" stroke="#0c600c"/><rect x="8.5" y="7.5" width="6" height="7" fill="#58d058" stroke="#0c600c" stroke-width="0.6"/></svg>
<div class="t" style="left:190px;top:912.36px;line-height:20px;font-size:16px;color:#1c1c22;letter-spacing:0.389px">404 Rotation [F...</div>
<div style="left:321px;top:241px;width:1px;height:694px;background:#fdfdff"></div>
<div style="left:350px;top:241px;width:25px;height:694px;background:#c8c6cb"></div>
<div style="left:351px;top:242px;width:23px;height:24px;background:linear-gradient(#fafafc,#e4e4e8);border:1px solid #a8a8b0"></div>
<svg style="left:355px;top:247px;" width="15" height="12" viewBox="0 0 15 12"><path d="M2 9l5.5-6 5.5 6" stroke="#404048" stroke-width="2.2" fill="none"/></svg>
<div style="left:351px;top:270px;width:23px;height:140px;background:linear-gradient(90deg,#f4f4f6,#dcdce0);border:1px solid #b0b0b8"></div>
<div style="left:357px;top:337px;width:11px;height:1px;background:#606068"></div>
<div style="left:357px;top:340px;width:11px;height:1px;background:#606068"></div>
<div style="left:357px;top:343px;width:11px;height:1px;background:#606068"></div>
<div style="left:351px;top:910px;width:23px;height:24px;background:linear-gradient(#fafafc,#e4e4e8);border:1px solid #a8a8b0"></div>
<svg style="left:355px;top:916px;" width="15" height="12" viewBox="0 0 15 12"><path d="M2 3l5.5 6 5.5-6" stroke="#404048" stroke-width="2.2" fill="none"/></svg>
<div style="left:34px;top:935px;width:341px;height:25px;background:#c8c6cb"></div>
<div style="left:35px;top:936px;width:23px;height:23px;background:linear-gradient(#fafafc,#e4e4e8);border:1px solid #a8a8b0"></div>
<svg style="left:40px;top:941px;" width="13" height="14" viewBox="0 0 13 14"><path d="M9 2L3 7l6 5" stroke="#404048" stroke-width="2.2" fill="none"/></svg>
<div style="left:62px;top:936px;width:245px;height:23px;background:linear-gradient(#f8f8fa,#e0e0e4);border:1px solid #b0b0b8"></div>
<div style="left:180px;top:943px;width:1px;height:10px;background:#404048"></div>
<div style="left:183px;top:943px;width:1px;height:10px;background:#404048"></div>
<div style="left:186px;top:943px;width:1px;height:10px;background:#404048"></div>
<div style="left:189px;top:943px;width:1px;height:10px;background:#404048"></div>
<div style="left:325px;top:936px;width:24px;height:23px;background:linear-gradient(#fafafc,#e4e4e8);border:1px solid #a8a8b0"></div>
<svg style="left:331px;top:941px;" width="13" height="14" viewBox="0 0 13 14"><path d="M4 2l6 5-6 5" stroke="#404048" stroke-width="2.2" fill="none"/></svg>
<div style="left:34px;top:960px;width:341px;height:4px;background:#26262c"></div>
<div style="left:34px;top:964px;width:341px;height:30px;background:#e5e4e8"></div>
<div style="left:34px;top:964px;width:28px;height:30px;background:#eceaee;border-right:1px solid #a0a0a8"></div>
<svg style="left:39px;top:970px;" width="12" height="16" viewBox="0 0 12 16"><path d="M3 2l6 6-6 6" stroke="#101010" stroke-width="2.4" fill="none"/></svg>
<div class="t" style="left:69px;top:969.0px;line-height:20px;font-size:20px;color:#151520;-webkit-text-stroke:0.5px #151520;letter-spacing:0.35px">Details view</div>
<div style="left:375px;top:101px;width:5px;height:893px;background:#22222a"></div>
<div style="left:380px;top:101px;width:1505px;height:33px;background:#2d3350"></div>
<div class="t" style="left:387px;top:108.0px;line-height:20px;font-size:20px;color:#f6f6fa;-webkit-text-stroke:0.35px #f6f6fa;letter-spacing:0.05px">PHE-Opr04 with buggy &amp; Alarms 18-9-2024</div>
<div class="t" style="left:812px;top:108.0px;line-height:20px;font-size:20px;color:#f6f6fa;-webkit-text-stroke:0.35px #f6f6fa;letter-spacing:-0.7px">PLC_1 [CPU 1515F-2 PN]</div>
<div class="t" style="left:1066px;top:108.0px;line-height:20px;font-size:20px;color:#f6f6fa;-webkit-text-stroke:0.35px #f6f6fa;letter-spacing:0.05px">Program blocks</div>
<div class="t" style="left:1238px;top:108.0px;line-height:20px;font-size:20px;color:#f6f6fa;-webkit-text-stroke:0.35px #f6f6fa;letter-spacing:0.05px">400 Endo Travel</div>
<div class="t" style="left:1422px;top:108.0px;line-height:20px;font-size:20px;color:#f6f6fa;-webkit-text-stroke:0.35px #f6f6fa;letter-spacing:0.05px">400 Endo To Bevel [FC400]</div>
<svg style="left:792px;top:112px;" width="7" height="12" viewBox="0 0 7 12"><path d="M1 0.5v11l5.5-5.5z" fill="#f6f6fa"/></svg>
<svg style="left:1045px;top:112px;" width="7" height="12" viewBox="0 0 7 12"><path d="M1 0.5v11l5.5-5.5z" fill="#f6f6fa"/></svg>
<svg style="left:1218px;top:112px;" width="7" height="12" viewBox="0 0 7 12"><path d="M1 0.5v11l5.5-5.5z" fill="#f6f6fa"/></svg>
<svg style="left:1402px;top:112px;" width="7" height="12" viewBox="0 0 7 12"><path d="M1 0.5v11l5.5-5.5z" fill="#f6f6fa"/></svg>
<div style="left:1786px;top:122px;width:14px;height:3px;background:#f6f6fa"></div>
<div style="left:1815px;top:110px;width:13px;height:12px;border:2px solid #f6f6fa;border-left:none;border-bottom:none"></div>
<div style="left:1810px;top:114px;width:13px;height:11px;background:#f6f6fa"></div>
<div style="left:1837px;top:110px;width:17px;height:16px;background:#f6f6fa"></div>
<div style="left:1837px;top:114px;width:17px;height:1px;background:#2d3350"></div>
<svg style="left:1860px;top:109px;" width="18" height="18" viewBox="0 0 18 18"><path d="M2 2l14 14M16 2L2 16" stroke="#f6f6fa" stroke-width="2.4"/></svg>
<div style="left:380px;top:134px;width:1505px;height:5px;background:#efeef2"></div>
<div style="left:380px;top:139px;width:1505px;height:34px;background:#cdcbd0"></div>
<div style="left:380px;top:172px;width:1505px;height:1px;background:#86858c"></div>
<div style="left:380px;top:173px;width:1505px;height:39px;background:#edecf0"></div>
<div style="left:670px;top:180px;width:31px;height:30px;background:#fbfbff;border:1.5px solid #7088c8;border-radius:2px"></div>
<div style="left:851px;top:180px;width:30px;height:30px;background:#fbfbff;border:1.5px solid #7088c8;border-radius:2px"></div>
<div style="left:884px;top:180px;width:31px;height:30px;background:#fbfbff;border:1.5px solid #7088c8;border-radius:2px"></div>
<svg style="left:389px;top:183px;" width="24" height="24" viewBox="0 0 24 24"><path d="M1 12v9M3 16h4M7 13l-3 3 3 3M17 13l3 3-3 3M23 12v9M21 16h-4" stroke="#3040d0" stroke-width="2" fill="none"/><rect x="8" y="13" width="8" height="7" fill="none" stroke="#3040d0" stroke-width="2"/><g stroke="#c8b000" stroke-width="1.5"><path d="M15 1v9M10.5 5.5h9M12 2.5l6 6M18 2.5l-6 6"/></g><circle cx="15" cy="5.5" r="2.4" fill="#ffff60"/></svg>
<svg style="left:422px;top:183px;" width="24" height="24" viewBox="0 0 24 24"><path d="M1 12v9M3 16h4M7 13l-3 3 3 3M17 13l3 3-3 3M23 12v9M21 16h-4" stroke="#3040d0" stroke-width="2" fill="none"/><rect x="8" y="13" width="8" height="7" fill="none" stroke="#3040d0" stroke-width="2"/><path d="M10 2l9 9M19 2l-9 9" stroke="#203060" stroke-width="2.2"/></svg>
<svg style="left:456px;top:183px;" width="24" height="24" viewBox="0 0 24 24"><path d="M2 10h13M2 14h14M2 18h14M3 22h12" stroke="#a8a8ac" stroke-width="2.5"/><g stroke="#a0a0a4" stroke-width="1.2"><path d="M18 2v9M13.5 6.5h9M15 3.5l6 6M21 3.5l-6 6"/></g><circle cx="18" cy="6.5" r="2" fill="#f0f0f0"/></svg>
<svg style="left:490px;top:183px;" width="24" height="24" viewBox="0 0 24 24"><path d="M2 10h13M2 14h14M2 18h14M3 22h12" stroke="#a8a8ac" stroke-width="2.5"/><g stroke="#a0a0a4" stroke-width="1.2"><path d="M18 2v9M13.5 6.5h9M15 3.5l6 6M21 3.5l-6 6"/></g><circle cx="18" cy="6.5" r="2" fill="#f0f0f0"/></svg>
<div style="left:521px;top:178px;width:1px;height:32px;border-left:1px dotted #a0a0a8"></div>
<svg style="left:530px;top:183px;" width="24" height="24" viewBox="0 0 24 24"><path d="M2 4v12a5 2.5 0 0 0 10 0V4" fill="#9a9aa0"/><ellipse cx="7" cy="4" rx="5" ry="2.5" fill="#c0c0c4"/><path d="M22 22c0-4-3-6-6-5M16 14l-2 3 3 2" stroke="#8a8a90" stroke-width="2" fill="none"/></svg>
<div style="left:561px;top:178px;width:1px;height:32px;border-left:1px dotted #a0a0a8"></div>
<svg style="left:572px;top:183px;" width="24" height="24" viewBox="0 0 24 24"><g fill="#707076"><path d="M1 4h9l2 3h11v2.5H1z"/><path d="M1 11h9l2 3h11v2.5H1z"/><path d="M1 18h9l2 3h11v2.5H1z"/></g></svg>
<svg style="left:605px;top:182px;" width="24" height="24" viewBox="0 0 24 24"><rect x="1.5" y="2.5" width="20" height="20" fill="#eef0ff" stroke="#2030a0" stroke-width="1.5"/><rect x="2" y="3" width="19" height="5" fill="#4050e0"/><path d="M3 3l4 4 4-4z" fill="#fff"/><path d="M4 14h16M4 11v6" stroke="#202860" stroke-width="1.8"/></svg>
<svg style="left:639px;top:183px;" width="24" height="24" viewBox="0 0 24 24"><rect x="1" y="4" width="22" height="7" fill="#4050e0"/><rect x="1" y="13" width="22" height="7" fill="#4050e0"/><path d="M3 5l4 2.5-4 2.5M3 14l4 2.5-4 2.5" fill="#fff"/><path d="M1 3v18" stroke="#2030a0" stroke-width="1.2"/></svg>
<svg style="left:674px;top:184px;" width="24" height="22" viewBox="0 0 24 22"><path d="M12 2c6 0 10 3.5 10 8s-4 8-10 8c-1 0-2 0-3-.3L5 21l1-4.5C3.5 15 2 12.7 2 10c0-4.5 4-8 10-8z" fill="#fff" stroke="#3050c0" stroke-width="1.8"/><circle cx="8" cy="10" r="1.3" fill="#203060"/><circle cx="12" cy="10" r="1.3" fill="#203060"/><circle cx="16" cy="10" r="1.3" fill="#203060"/></svg>
<svg style="left:706px;top:183px;" width="28" height="24" viewBox="0 0 28 24"><path d="M2 7h6M2 17h6" stroke="#203060" stroke-width="2"/><rect x="8" y="3" width="16" height="8" fill="#3040b0"/><rect x="8" y="13" width="16" height="8" fill="#3040b0"/><path d="M12 5v4M15 5v4M18 5h3v4h-3z" stroke="#fff" stroke-width="1.3" fill="none"/></svg>
<svg style="left:733px;top:186px;" width="13" height="20" viewBox="0 0 13 20"><path d="M6.5 2v10M2 8l4.5 5 4.5-5" stroke="#101010" stroke-width="2.4" fill="none"/><path d="M1 17h11" stroke="#101010" stroke-width="2.4"/></svg>
<svg style="left:755px;top:183px;" width="26" height="24" viewBox="0 0 26 24"><path d="M6 3h12a4 4 0 0 1 4 4v3a4 4 0 0 1-4 4H12l-4 3v-3H6a4 4 0 0 1-4-4V7a4 4 0 0 1 4-4z" fill="#f8f8f8" stroke="#404048" stroke-width="1.5"/><rect x="6" y="13" width="18" height="9" fill="#38383e"/><path d="M1 18h5" stroke="#202028" stroke-width="2"/></svg>
<svg style="left:782px;top:186px;" width="13" height="20" viewBox="0 0 13 20"><path d="M6.5 2v10M2 8l4.5 5 4.5-5" stroke="#101010" stroke-width="2.4" fill="none"/><path d="M1 17h11" stroke="#101010" stroke-width="2.4"/></svg>
<svg style="left:803px;top:183px;" width="28" height="24" viewBox="0 0 28 24"><path d="M2 3v8M4 7h4M8 4l-3 3 3 3M18 4l3 3-3 3M24 3v8" stroke="#3040d0" stroke-width="2" fill="none"/><rect x="10" y="4" width="6" height="6" fill="none" stroke="#3040d0" stroke-width="2"/><path d="M2 17h6" stroke="#203060" stroke-width="2"/><rect x="8" y="13" width="16" height="8" fill="#3040b0"/></svg>
<svg style="left:832px;top:186px;" width="13" height="20" viewBox="0 0 13 20"><path d="M6.5 2v10M2 8l4.5 5 4.5-5" stroke="#101010" stroke-width="2.4" fill="none"/><path d="M1 17h11" stroke="#101010" stroke-width="2.4"/></svg>
<svg style="left:855px;top:185px;" width="22" height="20" viewBox="0 0 22 20"><path d="M2 3h18M8 10h12M2 17h18" stroke="#202028" stroke-width="2.2"/><rect x="2" y="8" width="4" height="4" fill="#202028"/></svg>
<svg style="left:887px;top:183px;" width="26" height="24" viewBox="0 0 26 24"><rect x="2" y="2" width="5" height="5" fill="none" stroke="#3050c0"/><rect x="2" y="10" width="5" height="5" fill="none" stroke="#3050c0"/><rect x="2" y="18" width="5" height="5" fill="none" stroke="#3050c0"/><path d="M17 2l2.5 5 5.5.8-4 3.8 1 5.4-5-2.6-5 2.6 1-5.4-4-3.8 5.5-.8z" fill="#f0d020" stroke="#b09000"/><path d="M20 22h-8l3-3" stroke="#203060" stroke-width="2" fill="none"/></svg>
<div style="left:918px;top:178px;width:1px;height:32px;border-left:1px dotted #a0a0a8"></div>
<svg style="left:926px;top:182px;" width="28" height="26" viewBox="0 0 28 26"><path d="M9 21C2 18 2 8 9 6" stroke="#101830" stroke-width="3.6" fill="none"/><path d="M7 1l8 5-8 6z" fill="#101830"/><circle cx="20" cy="6" r="5.5" fill="#f0a080" stroke="#d04820" stroke-width="1.5"/><path d="M17.5 3.5l5 5M22.5 3.5l-5 5" stroke="#fff" stroke-width="1.6"/></svg>
<svg style="left:959px;top:182px;" width="28" height="26" viewBox="0 0 28 26"><path d="M6 3C1 6 2 13 8 15" stroke="#101830" stroke-width="3.6" fill="none"/><path d="M7 10l7 6-8 5z" fill="#101830"/><circle cx="21" cy="19" r="5.5" fill="#f0a080" stroke="#d04820" stroke-width="1.5"/><path d="M18.5 16.5l5 5M23.5 16.5l-5 5" stroke="#fff" stroke-width="1.6"/></svg>
<svg style="left:993px;top:182px;" width="28" height="26" viewBox="0 0 28 26"><path d="M9 21C2 18 2 8 9 6" stroke="#606068" stroke-width="3.6" fill="none"/><path d="M7 1l8 5-8 6z" fill="#606068"/><rect x="12" y="3" width="13" height="15" fill="#a8a8ae" stroke="#58585e"/><rect x="15" y="11" width="9" height="6" fill="#f0f0f2"/><text x="16" y="16.5" font-size="6" font-weight="bold" fill="#303038" font-family="Liberation Sans">01</text></svg>
<svg style="left:1027px;top:182px;" width="28" height="26" viewBox="0 0 28 26"><path d="M6 1C1 6 2 13 8 15" stroke="#606068" stroke-width="3.6" fill="none"/><path d="M7 10l7 6-8 5z" fill="#606068"/><rect x="12" y="3" width="13" height="15" fill="#a8a8ae" stroke="#58585e"/><rect x="15" y="11" width="9" height="6" fill="#f0f0f2"/><text x="16" y="16.5" font-size="6" font-weight="bold" fill="#303038" font-family="Liberation Sans">01</text></svg>
<svg style="left:1061px;top:182px;" width="28" height="26" viewBox="0 0 28 26"><path d="M2 6h5M2 11h5" stroke="#404048" stroke-width="2.4"/><rect x="6" y="2" width="16" height="13" rx="2" fill="#505058"/><path d="M11 5l7 4-7 4z" fill="#f0f0f2"/><path d="M22 8h4" stroke="#404048" stroke-width="2.4"/><path d="M8 17l5 5 11-11" stroke="#20a040" stroke-width="3.4" fill="none"/></svg>
<div style="left:1094px;top:178px;width:1px;height:32px;border-left:1px dotted #a0a0a8"></div>
<svg style="left:1102px;top:182px;" width="28" height="26" viewBox="0 0 28 26"><path d="M9 21C2 18 2 8 9 6" stroke="#101830" stroke-width="3.6" fill="none"/><path d="M7 1l8 5-8 6z" fill="#101830"/><path d="M13 10h12M13 14h12M13 18h12" stroke="#8890b0" stroke-width="2.4"/><path d="M13 18h12" stroke="#3040c0" stroke-width="2"/></svg>
<svg style="left:1139px;top:182px;" width="24" height="26" viewBox="0 0 24 26"><path d="M3 1v11" stroke="#303038" stroke-width="3"/><path d="M9 12h12M9 17h12M9 22h12" stroke="#707078" stroke-width="3"/></svg>
<svg style="left:1172px;top:182px;" width="26" height="26" viewBox="0 0 26 26"><path d="M2 2l9 9M6 1v5M1 6h5" stroke="#404048" stroke-width="2.2"/><path d="M11 12h12M11 17h12M11 22h12" stroke="#808088" stroke-width="3"/></svg>
<div style="left:1203px;top:178px;width:1px;height:32px;border-left:1px dotted #a0a0a8"></div>
<svg style="left:1210px;top:182px;" width="28" height="26" viewBox="0 0 28 26"><path d="M9 21C2 18 2 8 9 6" stroke="#101830" stroke-width="3.6" fill="none"/><path d="M7 1l8 5-8 6z" fill="#101830"/><path d="M14 5h8v18l-4-3-4 3z" fill="#3050d0"/></svg>
<svg style="left:1244px;top:182px;" width="28" height="26" viewBox="0 0 28 26"><path d="M9 21C2 18 2 8 9 6" stroke="#101830" stroke-width="3.6" fill="none"/><path d="M7 1l8 5-8 6z" fill="#101830"/><path d="M14 3h8v18l-4-3-4 3z" fill="#3050d0"/></svg>
<div style="left:1277px;top:178px;width:1px;height:32px;border-left:1px dotted #a0a0a8"></div>
<svg style="left:1287px;top:182px;" width="26" height="26" viewBox="0 0 26 26"><path d="M8 12a7 7 0 0 0 0 13z" fill="#8a8a90"/><path d="M8 12a7 7 0 0 1 0 13z" fill="#c8c8cc"/><circle cx="15" cy="8" r="5" fill="#e8e8ec" stroke="#6a6a70" stroke-width="2.2"/><path d="M19 12l5 5" stroke="#6a6a70" stroke-width="3.2"/></svg>
<svg style="left:1320px;top:182px;" width="26" height="26" viewBox="0 0 26 26"><rect x="2" y="3" width="8" height="6" rx="2" fill="none" stroke="#203080" stroke-width="2.4"/><rect x="14" y="3" width="8" height="6" rx="2" fill="none" stroke="#203080" stroke-width="2.4"/><path d="M10 5h4M22 5h3v4" stroke="#203080" stroke-width="2.2"/><path d="M11 14l9 5-9 5z" fill="#70d0a0"/></svg>
<div style="left:1351px;top:178px;width:1px;height:32px;border-left:1px dotted #a0a0a8"></div>
<svg style="left:1361px;top:183px;" width="24" height="24" viewBox="0 0 24 24"><path d="M2 4v14a6 3 0 0 0 12 0V4" fill="#a0a0a6"/><ellipse cx="8" cy="4" rx="6" ry="3" fill="#c8c8cc"/><rect x="13" y="14" width="8" height="8" fill="#68686e"/><path d="M15 14v-3a2 2 0 0 1 4 0v3" stroke="#68686e" stroke-width="1.5" fill="none"/></svg>
<svg style="left:1840px;top:183px;" width="26" height="24" viewBox="0 0 26 24"><rect x="1" y="2" width="20" height="16" fill="#f4f6ff" stroke="#6070a0"/><path d="M1 6h20M3 10h10M3 14h10" stroke="#8090c0" stroke-width="1.5"/><circle cx="20" cy="13" r="3" fill="#e0a060"/><path d="M15 23c0-4 2-6 5-6s5 2 5 6z" fill="#3060c0"/></svg>
<div style="left:380px;top:212px;width:1505px;height:31px;background:#dcdbe0"></div>
<div class="t" style="left:414px;top:216.0px;line-height:20px;font-size:20px;color:#141418;-webkit-text-stroke:0.35px #141418;letter-spacing:0.05px">400 Endo To Bevel</div>
<div style="left:380px;top:242px;width:1505px;height:13px;background:linear-gradient(#f0f0f2,#e4e4e8);border-top:1px solid #b8b8be;border-bottom:1px solid #a0a0a6"></div>
<div style="left:423px;top:244px;width:1px;height:11px;background:#b0b0b8"></div>
<div style="left:437px;top:244px;width:1px;height:11px;background:#b0b0b8"></div>
<div style="left:707px;top:244px;width:1px;height:11px;background:#b0b0b8"></div>
<div style="left:876px;top:244px;width:1px;height:11px;background:#b0b0b8"></div>
<div style="left:1016px;top:244px;width:1px;height:11px;background:#b0b0b8"></div>
<div style="left:1438px;top:244px;width:1px;height:11px;background:#b0b0b8"></div>
<div style="left:1838px;top:244px;width:1px;height:11px;background:#b0b0b8"></div>
<div style="left:380px;top:243px;width:1505px;height:12px;overflow:hidden"><div class="t" style="left:65px;top:5px;font-size:15px;line-height:16px;color:#303038;letter-spacing:0.6px">Name</div><div class="t" style="left:332px;top:5px;font-size:15px;line-height:16px;color:#303038;letter-spacing:0.6px">Data type</div><div class="t" style="left:502px;top:5px;font-size:15px;line-height:16px;color:#303038;letter-spacing:0.6px">Default value</div><div class="t" style="left:642px;top:5px;font-size:15px;line-height:16px;color:#303038;letter-spacing:0.6px">Comment</div></div>
<div style="left:380px;top:255px;width:1505px;height:10px;background:#dcdbe0"></div>
<div style="left:1091px;top:256px;width:32px;height:9px;background:#e8e8ec;border:1px solid #b0b0b6"></div>
<svg style="left:1101px;top:257px;" width="12" height="7" viewBox="0 0 12 7"><path d="M1 6l5-5 5 5z" fill="#101010"/></svg>
<div style="left:1139px;top:256px;width:32px;height:9px;background:#e8e8ec;border:1px solid #b0b0b6"></div>
<svg style="left:1149px;top:258px;" width="12" height="7" viewBox="0 0 12 7"><path d="M1 1l5 5 5-5z" fill="#101010"/></svg>
<div style="left:380px;top:263px;width:1505px;height:1px;background:#f8f8fa"></div>
<div style="left:380px;top:264px;width:1505px;height:2px;background:#a8a7ad"></div>
<div style="left:380px;top:266px;width:1505px;height:52px;background:#edecf0"></div>
<div style="left:382px;top:268px;width:45px;height:45px;background:#fdfdfe"></div>
<div style="left:430px;top:268px;width:45px;height:45px;background:#fdfdfe"></div>
<div style="left:478px;top:268px;width:45px;height:45px;background:#dfe9f5"></div>
<div style="left:526px;top:268px;width:45px;height:45px;background:#fdfdfe"></div>
<div style="left:574px;top:268px;width:45px;height:45px;background:#fdfdfe"></div>
<div style="left:621px;top:268px;width:45px;height:45px;background:#fdfdfe"></div>
<svg style="left:388px;top:284px;" width="33" height="14" viewBox="0 0 33 14"><path d="M1 7h10M21 7h11" stroke="#101830" stroke-width="2.6"/><path d="M10.5 2v10M20.5 2v10" stroke="#101830" stroke-width="3"/></svg>
<svg style="left:435px;top:284px;" width="36" height="14" viewBox="0 0 36 14"><path d="M1 7h9M24 7h11" stroke="#101830" stroke-width="2.6"/><path d="M9.5 2v10M24.5 2v10" stroke="#101830" stroke-width="3"/><path d="M16 11l2-8" stroke="#101830" stroke-width="1.5"/></svg>
<svg style="left:480px;top:283px;" width="41" height="16" viewBox="0 0 41 16"><path d="M1 8h15M25 8h15" stroke="#6a7898" stroke-width="2.6"/><path d="M17 2c-2.5 3.5-2.5 8.5 0 12M24 2c2.5 3.5 2.5 8.5 0 12" stroke="#6a7898" stroke-width="2.2" fill="none"/></svg>
<svg style="left:534px;top:280px;" width="28" height="22" viewBox="0 0 28 22"><rect x="4" y="2" width="19" height="18" fill="#fff" stroke="#101830" stroke-width="1.8"/><path d="M1 5h3M23 5h4" stroke="#101830" stroke-width="1.8"/><text x="6.5" y="15.5" font-size="12" font-family="Liberation Serif" fill="#101830" letter-spacing="-0.5">??</text></svg>
<svg style="left:582px;top:284px;" width="25" height="12" viewBox="0 0 25 12"><path d="M2 1v6h16" stroke="#101830" stroke-width="2.8" fill="none"/><path d="M16 1l8 5-8 5z" fill="#101830"/></svg>
<svg style="left:630px;top:279px;" width="26" height="16" viewBox="0 0 26 16"><path d="M1 12.5h17V6" stroke="#101830" stroke-width="2.8" fill="none"/><path d="M12 7l6-6 6 6z" fill="#101830"/></svg>
<div style="left:380px;top:313px;width:290px;height:6px;background:#e6e5ea"></div>
<div style="left:380px;top:319px;width:1481px;height:610px;background:#ffffff"></div>
<div style="left:408px;top:319px;width:1px;height:610px;background:#f0f0f2"></div>
<div style="left:1453px;top:319px;width:1px;height:610px;background:#f2f2f4"></div>
<div style="left:1081px;top:319px;width:224px;height:610px;background:#cfe1f4"></div>
<div style="left:416.0px;top:319px;width:3px;height:610px;background:#0a0a0a"></div>
<div style="left:419px;top:510.0px;width:662px;height:3px;background:#0a0a0a"></div>
<div style="left:474px;top:502.5px;width:18px;height:18px;background:#fff"></div>
<div style="left:474px;top:502.5px;width:3px;height:18px;background:#0a0a0a"></div>
<div style="left:489px;top:502.5px;width:3px;height:18px;background:#0a0a0a"></div>
<div style="left:603px;top:502.5px;width:18px;height:18px;background:#fff"></div>
<div style="left:603px;top:502.5px;width:3px;height:18px;background:#0a0a0a"></div>
<div style="left:618px;top:502.5px;width:3px;height:18px;background:#0a0a0a"></div>
<div class="t" style="left:331px;width:300px;top:409.0px;line-height:20px;font-size:15px;text-align:center;color:#2898a0;-webkit-text-stroke:0.55px #2898a0;letter-spacing:0px">%DB400.</div>
<div class="t" style="left:331px;width:300px;top:426.0px;line-height:20px;font-size:15px;text-align:center;color:#2898a0;-webkit-text-stroke:0.55px #2898a0;letter-spacing:0px">DBX0.3</div>
<div class="t" style="left:331px;width:300px;top:445.5px;line-height:20px;font-size:15px;text-align:center;color:#2a2a2e;letter-spacing:0.5px">&quot;400 Endo to</div>
<div class="t" style="left:331px;width:300px;top:462.5px;line-height:20px;font-size:15px;text-align:center;color:#2a2a2e;letter-spacing:0.5px">bevel data&quot;.</div>
<div class="t" style="left:331px;width:300px;top:479.5px;line-height:20px;font-size:15px;text-align:center;color:#2a2a2e;letter-spacing:0.5px">&quot;Man/Auto&quot;</div>
<div class="t" style="left:461px;width:300px;top:409.0px;line-height:20px;font-size:15px;text-align:center;color:#2898a0;-webkit-text-stroke:0.55px #2898a0;letter-spacing:0px">%DB400.</div>
<div class="t" style="left:461px;width:300px;top:426.0px;line-height:20px;font-size:15px;text-align:center;color:#2898a0;-webkit-text-stroke:0.55px #2898a0;letter-spacing:0px">DBX23.5</div>
<div class="t" style="left:461px;width:300px;top:445.5px;line-height:20px;font-size:15px;text-align:center;color:#2a2a2e;letter-spacing:0.5px">&quot;400 Endo to</div>
<div class="t" style="left:461px;width:300px;top:462.5px;line-height:20px;font-size:15px;text-align:center;color:#2a2a2e;letter-spacing:0.5px">bevel data&quot;.</div>
<div class="t" style="left:461px;width:300px;top:479.5px;line-height:20px;font-size:15px;text-align:center;color:#2a2a2e;letter-spacing:0.5px">&quot;ok CCW G1&quot;</div>
<div class="t" style="right:860px;top:316px;line-height:20px;font-size:15px;text-align:right;color:#2898a0;-webkit-text-stroke:0.55px #2898a0;letter-spacing:0px">1</div>
<div class="t" style="right:860px;top:336.0px;line-height:20px;font-size:15px;text-align:right;color:#2a2a2e;letter-spacing:0.5px">&quot;400 Endo to</div>
<div class="t" style="right:860px;top:353.0px;line-height:20px;font-size:15px;text-align:right;color:#2a2a2e;letter-spacing:0.5px">bevel data&quot;.</div>
<div class="t" style="right:860px;top:369.5px;line-height:20px;font-size:15px;text-align:right;color:#2a2a2e;letter-spacing:0.5px">&quot;Endo-1-</div>
<div class="t" style="right:860px;top:386.0px;line-height:20px;font-size:15px;text-align:right;color:#2a2a2e;letter-spacing:0.5px">ready&quot;</div>
<div style="left:1064px;top:401px;width:17px;height:3px;background:#0a0a0a"></div>
<div class="t" style="left:1087px;top:391.0px;line-height:20px;font-size:16px;color:#141418;-webkit-text-stroke:0.25px #141418">Enable</div>
<div class="t" style="left:1087px;top:501.0px;line-height:20px;font-size:16px;color:#141418;-webkit-text-stroke:0.25px #141418">Cw</div>
<div class="t" style="right:620px;top:317.0px;line-height:20px;font-size:16px;text-align:right;color:#141418;-webkit-text-stroke:0.25px #141418">Running</div>
<div class="t" style="right:620px;top:336.0px;line-height:20px;font-size:16px;text-align:right;color:#141418;-webkit-text-stroke:0.25px #141418">FAULT</div>
<div class="t" style="right:620px;top:354.0px;line-height:20px;font-size:16px;text-align:right;color:#141418;-webkit-text-stroke:0.25px #141418">Act_RPM</div>
<div class="t" style="right:620px;top:427.0px;line-height:20px;font-size:16px;text-align:right;color:#141418;-webkit-text-stroke:0.25px #141418">Data</div>
<div style="left:1306px;top:327px;width:16px;height:3px;background:#0a0a0a"></div>
<div style="left:1320px;top:323px;width:3px;height:10px;background:#0a0a0a"></div>
<div style="left:1306px;top:345px;width:16px;height:3px;background:#0a0a0a"></div>
<div style="left:1320px;top:341px;width:3px;height:10px;background:#0a0a0a"></div>
<div style="left:1306px;top:364px;width:17px;height:2px;background:#eca040"></div>
<div style="left:1306px;top:437px;width:17px;height:2px;background:#eca040"></div>
<div class="t" style="left:1328px;top:317.0px;line-height:20px;font-size:15px;color:#2a2a2e;letter-spacing:0.5px">#Run</div>
<div class="t" style="left:1328px;top:336.0px;line-height:20px;font-size:15px;color:#2a2a2e;letter-spacing:0.5px">#Fault</div>
<div class="t" style="left:1328px;top:354.0px;line-height:20px;font-size:15px;color:#2a2a2e;letter-spacing:0.5px">#RPM</div>
<div class="t" style="left:1328px;top:373.0px;line-height:20px;font-size:15px;color:#2a2a2e;letter-spacing:0.5px">&quot;850 G120</div>
<div class="t" style="left:1328px;top:389.5px;line-height:20px;font-size:15px;color:#2a2a2e;letter-spacing:0.5px">Data&quot;.&quot;VFD</div>
<div class="t" style="left:1328px;top:406.5px;line-height:20px;font-size:15px;color:#2a2a2e;letter-spacing:0.5px">Endo Conv1-</div>
<div class="t" style="left:1328px;top:423.0px;line-height:20px;font-size:15px;color:#2a2a2e;letter-spacing:0.5px">1&quot;</div>
<div style="left:419px;top:674.0px;width:515px;height:3px;background:#0a0a0a"></div>
<div style="left:474px;top:666.5px;width:18px;height:18px;background:#fff"></div>
<div style="left:474px;top:666.5px;width:3px;height:18px;background:#0a0a0a"></div>
<div style="left:489px;top:666.5px;width:3px;height:18px;background:#0a0a0a"></div>
<svg style="left:474px;top:666.5px;" width="18" height="18" viewBox="0 0 18 18"><path d="M2 17L16 1" stroke="#0a0a0a" stroke-width="2.6"/></svg>
<div style="left:603px;top:666.5px;width:18px;height:18px;background:#fff"></div>
<div style="left:603px;top:666.5px;width:3px;height:18px;background:#0a0a0a"></div>
<div style="left:618px;top:666.5px;width:3px;height:18px;background:#0a0a0a"></div>
<div style="left:732.5px;top:666.5px;width:18px;height:18px;background:#fff"></div>
<div style="left:732.5px;top:666.5px;width:3px;height:18px;background:#0a0a0a"></div>
<div style="left:747.5px;top:666.5px;width:3px;height:18px;background:#0a0a0a"></div>
<svg style="left:732.5px;top:666.5px;" width="18" height="18" viewBox="0 0 18 18"><path d="M2 17L16 1" stroke="#0a0a0a" stroke-width="2.6"/></svg>
<div style="left:861.5px;top:666.5px;width:18px;height:18px;background:#fff"></div>
<div style="left:861.5px;top:666.5px;width:3px;height:18px;background:#0a0a0a"></div>
<div style="left:876.5px;top:666.5px;width:3px;height:18px;background:#0a0a0a"></div>
<div style="left:546.0px;top:675.5px;width:3px;height:72.0px;background:#0a0a0a"></div>
<div style="left:675.0px;top:675.5px;width:3px;height:72.0px;background:#0a0a0a"></div>
<div style="left:546px;top:746.0px;width:132px;height:3px;background:#0a0a0a"></div>
<div style="left:603px;top:738.5px;width:18px;height:18px;background:#fff"></div>
<div style="left:603px;top:738.5px;width:3px;height:18px;background:#0a0a0a"></div>
<div style="left:618px;top:738.5px;width:3px;height:18px;background:#0a0a0a"></div>
<div class="t" style="left:461px;width:300px;top:701.5px;line-height:20px;font-size:15px;text-align:center;color:#2898a0;-webkit-text-stroke:0.55px #2898a0;letter-spacing:0px">%M1000.1</div>
<div class="t" style="left:461px;width:300px;top:719.5px;line-height:20px;font-size:15px;text-align:center;color:#1e1e20;letter-spacing:-0.2px">&quot;CCW_test&quot;</div>
<div style="left:933.0px;top:510.0px;width:3px;height:167.0px;background:#0a0a0a"></div>
<div class="t" style="left:331px;width:300px;top:573.0px;line-height:20px;font-size:15px;text-align:center;color:#2898a0;-webkit-text-stroke:0.55px #2898a0;letter-spacing:0px">%DB400.</div>
<div class="t" style="left:331px;width:300px;top:590.0px;line-height:20px;font-size:15px;text-align:center;color:#2898a0;-webkit-text-stroke:0.55px #2898a0;letter-spacing:0px">DBX0.3</div>
<div class="t" style="left:331px;width:300px;top:610.0px;line-height:20px;font-size:15px;text-align:center;color:#2a2a2e;letter-spacing:0.5px">&quot;400 Endo to</div>
<div class="t" style="left:331px;width:300px;top:627.0px;line-height:20px;font-size:15px;text-align:center;color:#2a2a2e;letter-spacing:0.5px">bevel data&quot;.</div>
<div class="t" style="left:331px;width:300px;top:644.0px;line-height:20px;font-size:15px;text-align:center;color:#2a2a2e;letter-spacing:0.5px">&quot;Man/Auto&quot;</div>
<div class="t" style="left:461px;width:300px;top:555.5px;line-height:20px;font-size:15px;text-align:center;color:#2898a0;-webkit-text-stroke:0.55px #2898a0;letter-spacing:0px">%DB400.</div>
<div class="t" style="left:461px;width:300px;top:572.5px;line-height:20px;font-size:15px;text-align:center;color:#2898a0;-webkit-text-stroke:0.55px #2898a0;letter-spacing:0px">DBX0.6</div>
<div class="t" style="left:461px;width:300px;top:591.5px;line-height:20px;font-size:15px;text-align:center;color:#2a2a2e;letter-spacing:0.5px">&quot;400 Endo to</div>
<div class="t" style="left:461px;width:300px;top:608.5px;line-height:20px;font-size:15px;text-align:center;color:#2a2a2e;letter-spacing:0.5px">bevel data&quot;.</div>
<div class="t" style="left:461px;width:300px;top:625.5px;line-height:20px;font-size:15px;text-align:center;color:#2a2a2e;letter-spacing:0.5px">&quot;Transfer conv.</div>
<div class="t" style="left:461px;width:300px;top:642.5px;line-height:20px;font-size:15px;text-align:center;color:#2a2a2e;letter-spacing:0.5px">CCW&quot;</div>
<div class="t" style="left:590px;width:300px;top:537.0px;line-height:20px;font-size:15px;text-align:center;color:#2898a0;-webkit-text-stroke:0.55px #2898a0;letter-spacing:0px">%DB18.DBX18.</div>
<div class="t" style="left:590px;width:300px;top:554.0px;line-height:20px;font-size:15px;text-align:center;color:#2898a0;-webkit-text-stroke:0.55px #2898a0;letter-spacing:0px">3</div>
<div class="t" style="left:590px;width:300px;top:573.0px;line-height:20px;font-size:15px;text-align:center;color:#2a2a2e;letter-spacing:0.5px">&quot;200</div>
<div class="t" style="left:590px;width:300px;top:590.0px;line-height:20px;font-size:15px;text-align:center;color:#2a2a2e;letter-spacing:0.5px">Setpoints</div>
<div class="t" style="left:590px;width:300px;top:607.0px;line-height:20px;font-size:15px;text-align:center;color:#2a2a2e;letter-spacing:0.5px">Data Plant&quot;.</div>
<div class="t" style="left:590px;width:300px;top:624.0px;line-height:20px;font-size:15px;text-align:center;color:#2a2a2e;letter-spacing:0.5px">&quot;Endo 1</div>
<div class="t" style="left:590px;width:300px;top:641.0px;line-height:20px;font-size:15px;text-align:center;color:#2a2a2e;letter-spacing:0.5px">Group 1&quot;</div>
<div class="t" style="left:719px;width:300px;top:610.0px;line-height:20px;font-size:15px;text-align:center;color:#2898a0;-webkit-text-stroke:0.55px #2898a0;letter-spacing:0px">%I291.4</div>
<div class="t" style="left:719px;width:300px;top:628.0px;line-height:20px;font-size:15px;text-align:center;color:#2a2a2e;letter-spacing:0.5px">&quot;CONV-01-1</div>
<div class="t" style="left:719px;width:300px;top:645.0px;line-height:20px;font-size:15px;text-align:center;color:#2a2a2e;letter-spacing:0.5px">IN-4&quot;</div>
<div style="left:419px;top:843.0px;width:515px;height:3px;background:#0a0a0a"></div>
<div style="left:474px;top:835.5px;width:18px;height:18px;background:#fff"></div>
<div style="left:474px;top:835.5px;width:3px;height:18px;background:#0a0a0a"></div>
<div style="left:489px;top:835.5px;width:3px;height:18px;background:#0a0a0a"></div>
<svg style="left:474px;top:835.5px;" width="18" height="18" viewBox="0 0 18 18"><path d="M2 17L16 1" stroke="#0a0a0a" stroke-width="2.6"/></svg>
<div style="left:603px;top:835.5px;width:18px;height:18px;background:#fff"></div>
<div style="left:603px;top:835.5px;width:3px;height:18px;background:#0a0a0a"></div>
<div style="left:618px;top:835.5px;width:3px;height:18px;background:#0a0a0a"></div>
<div style="left:732.5px;top:835.5px;width:18px;height:18px;background:#fff"></div>
<div style="left:732.5px;top:835.5px;width:3px;height:18px;background:#0a0a0a"></div>
<div style="left:747.5px;top:835.5px;width:3px;height:18px;background:#0a0a0a"></div>
<svg style="left:732.5px;top:835.5px;" width="18" height="18" viewBox="0 0 18 18"><path d="M2 17L16 1" stroke="#0a0a0a" stroke-width="2.6"/></svg>
<div style="left:861.5px;top:835.5px;width:18px;height:18px;background:#fff"></div>
<div style="left:861.5px;top:835.5px;width:3px;height:18px;background:#0a0a0a"></div>
<div style="left:876.5px;top:835.5px;width:3px;height:18px;background:#0a0a0a"></div>
<div style="left:546.0px;top:844.5px;width:3px;height:72.0px;background:#0a0a0a"></div>
<div style="left:675.0px;top:844.5px;width:3px;height:72.0px;background:#0a0a0a"></div>
<div style="left:546px;top:915.0px;width:132px;height:3px;background:#0a0a0a"></div>
<div style="left:603px;top:907.5px;width:18px;height:18px;background:#fff"></div>
<div style="left:603px;top:907.5px;width:3px;height:18px;background:#0a0a0a"></div>
<div style="left:618px;top:907.5px;width:3px;height:18px;background:#0a0a0a"></div>
<div class="t" style="left:461px;width:300px;top:870.5px;line-height:20px;font-size:15px;text-align:center;color:#2898a0;-webkit-text-stroke:0.55px #2898a0;letter-spacing:0px">%M1000.1</div>
<div class="t" style="left:461px;width:300px;top:888.5px;line-height:20px;font-size:15px;text-align:center;color:#1e1e20;letter-spacing:-0.2px">&quot;CCW_test&quot;</div>
<div style="left:933.0px;top:761px;width:3px;height:85.0px;background:#0a0a0a"></div>
<div class="t" style="left:331px;width:300px;top:758.5px;line-height:20px;font-size:15px;text-align:center;color:#2898a0;-webkit-text-stroke:0.55px #2898a0;letter-spacing:0px">DBX0.3</div>
<div class="t" style="left:331px;width:300px;top:778.0px;line-height:20px;font-size:15px;text-align:center;color:#2a2a2e;letter-spacing:0.5px">&quot;400 Endo to</div>
<div class="t" style="left:331px;width:300px;top:795.0px;line-height:20px;font-size:15px;text-align:center;color:#2a2a2e;letter-spacing:0.5px">bevel data&quot;.</div>
<div class="t" style="left:331px;width:300px;top:812.0px;line-height:20px;font-size:15px;text-align:center;color:#2a2a2e;letter-spacing:0.5px">&quot;Man/Auto&quot;</div>
<div class="t" style="left:461px;width:300px;top:760.5px;line-height:20px;font-size:15px;text-align:center;color:#2a2a2e;letter-spacing:0.5px">&quot;400 Endo to</div>
<div class="t" style="left:461px;width:300px;top:777.5px;line-height:20px;font-size:15px;text-align:center;color:#2a2a2e;letter-spacing:0.5px">bevel data&quot;.</div>
<div class="t" style="left:461px;width:300px;top:794.5px;line-height:20px;font-size:15px;text-align:center;color:#2a2a2e;letter-spacing:0.5px">&quot;Transfer conv.</div>
<div class="t" style="left:461px;width:300px;top:811.5px;line-height:20px;font-size:15px;text-align:center;color:#2a2a2e;letter-spacing:0.5px">CCW&quot;</div>
<div class="t" style="left:590px;width:300px;top:759.5px;line-height:20px;font-size:15px;text-align:center;color:#2a2a2e;letter-spacing:0.5px">Setpoints</div>
<div class="t" style="left:590px;width:300px;top:776.5px;line-height:20px;font-size:15px;text-align:center;color:#2a2a2e;letter-spacing:0.5px">Data Plant&quot;.</div>
<div class="t" style="left:590px;width:300px;top:793.5px;line-height:20px;font-size:15px;text-align:center;color:#2a2a2e;letter-spacing:0.5px">&quot;Endo 1</div>
<div class="t" style="left:590px;width:300px;top:810.5px;line-height:20px;font-size:15px;text-align:center;color:#2a2a2e;letter-spacing:0.5px">Group 1&quot;</div>
<div class="t" style="left:719px;width:300px;top:779.0px;line-height:20px;font-size:15px;text-align:center;color:#2898a0;-webkit-text-stroke:0.55px #2898a0;letter-spacing:0px">%I291.4</div>
<div class="t" style="left:719px;width:300px;top:797.0px;line-height:20px;font-size:15px;text-align:center;color:#2a2a2e;letter-spacing:0.5px">&quot;CONV-01-1</div>
<div class="t" style="left:719px;width:300px;top:814.0px;line-height:20px;font-size:15px;text-align:center;color:#2a2a2e;letter-spacing:0.5px">IN-4&quot;</div>
<svg style="left:1262px;top:700px;" width="48" height="66" viewBox="0 0 48 66"><path d="M7.5 8.5L7.5 53L20 43.5L29.5 60.5L35.5 57L26.5 41L41.5 40.5Z" fill="#fff" stroke="#141420" stroke-width="3" stroke-linejoin="round"/></svg>
<div style="left:1861px;top:319px;width:24px;height:610px;background:#c6c4c9"></div>
<div style="left:1861px;top:320px;width:23px;height:25px;background:linear-gradient(#fafafc,#e4e4e8);border:1px solid #a8a8b0"></div>
<svg style="left:1865px;top:326px;" width="15" height="12" viewBox="0 0 15 12"><path d="M2 9l5.5-6 5.5 6" stroke="#404048" stroke-width="2.2" fill="none"/></svg>
<div style="left:1861px;top:460px;width:23px;height:33px;background:linear-gradient(90deg,#f8f8fa,#e4e4e8);border:1px solid #a0a0a8"></div>
<div style="left:1867px;top:473px;width:11px;height:1px;background:#606068"></div>
<div style="left:1867px;top:476px;width:11px;height:1px;background:#606068"></div>
<div style="left:1867px;top:479px;width:11px;height:1px;background:#606068"></div>
<div style="left:1867px;top:482px;width:11px;height:1px;background:#606068"></div>
<div style="left:1861px;top:904px;width:23px;height:25px;background:linear-gradient(#fafafc,#e4e4e8);border:1px solid #a8a8b0"></div>
<svg style="left:1865px;top:910px;" width="15" height="12" viewBox="0 0 15 12"><path d="M2 3l5.5 6 5.5-6" stroke="#404048" stroke-width="2.2" fill="none"/></svg>
<div style="left:380px;top:929px;width:1481px;height:26px;background:#edecf0"></div>
<div style="left:1497px;top:930px;width:218px;height:24px;background:#fff;border:1px solid #9a9aa0"></div>
<div class="t" style="left:1501px;top:932.0px;line-height:20px;font-size:16px;color:#141418;letter-spacing:0.1px">100%</div>
<div style="left:1691px;top:931px;width:23px;height:22px;background:linear-gradient(#f4f4f6,#dcdce0);border-left:1px solid #a0a0a8"></div>
<svg style="left:1696px;top:937px;" width="13" height="9" viewBox="0 0 13 9"><path d="M1 1h11L6.5 8z" fill="#101010"/></svg>
<div style="left:1741px;top:940px;width:93px;height:1.5px;background:#606068"></div>
<div style="left:1741.0px;top:947px;width:1px;height:5px;background:#303038"></div>
<div style="left:1749.3px;top:947px;width:1px;height:5px;background:#303038"></div>
<div style="left:1757.6px;top:947px;width:1px;height:5px;background:#303038"></div>
<div style="left:1765.9px;top:947px;width:1px;height:5px;background:#303038"></div>
<div style="left:1774.2px;top:947px;width:1px;height:5px;background:#303038"></div>
<div style="left:1782.5px;top:947px;width:1px;height:5px;background:#303038"></div>
<div style="left:1790.8px;top:947px;width:1px;height:5px;background:#303038"></div>
<div style="left:1799.1px;top:947px;width:1px;height:5px;background:#303038"></div>
<div style="left:1807.4px;top:947px;width:1px;height:5px;background:#303038"></div>
<div style="left:1815.7px;top:947px;width:1px;height:5px;background:#303038"></div>
<div style="left:1824.0px;top:947px;width:1px;height:5px;background:#303038"></div>
<div style="left:1832.3px;top:947px;width:1px;height:5px;background:#303038"></div>
<svg style="left:1768px;top:934px;" width="12" height="16" viewBox="0 0 12 16"><path d="M1 1h10v9l-5 5-5-5z" fill="#e8e8ec" stroke="#707078"/></svg>
<div style="left:380px;top:955px;width:1505px;height:4px;background:#24242c"></div>
<div style="left:1885px;top:101px;width:35px;height:893px;background:#b4b2b7"></div>
<div style="left:1885px;top:101px;width:1px;height:893px;background:#505058"></div>
<svg style="left:1893px;top:108px;" width="14" height="20" viewBox="0 0 14 20"><path d="M12 1L2 10l10 9z" fill="#fbfbfd"/></svg>
<div style="left:1887px;top:143px;width:28px;height:170px;background:#edecf0;border:1px solid #98969c;border-right:none"></div>
<div class="t" style="left:1890px;top:174px;width:22px;line-height:22px;writing-mode:vertical-rl;font-size:17px;font-weight:bold;color:#141418;letter-spacing:0.8px">Instructions</div>
<div style="left:1887px;top:317px;width:28px;height:130px;background:#e4e3e7;border:1px solid #98969c;border-right:none"></div>
<div class="t" style="left:1890px;top:348px;width:22px;line-height:22px;writing-mode:vertical-rl;font-size:17px;font-weight:normal;-webkit-text-stroke:0.3px #4e4e54;color:#4e4e54;letter-spacing:1.6px">Testing</div>
<div style="left:1887px;top:451px;width:28px;height:108px;background:#e4e3e7;border:1px solid #98969c;border-right:none"></div>
<div class="t" style="left:1890px;top:480px;width:22px;line-height:22px;writing-mode:vertical-rl;font-size:17px;font-weight:normal;-webkit-text-stroke:0.3px #4e4e54;color:#4e4e54;letter-spacing:1.3px">Tasks</div>
<div style="left:1887px;top:564px;width:28px;height:140px;background:#e4e3e7;border:1px solid #98969c;border-right:none"></div>
<div class="t" style="left:1890px;top:597px;width:22px;line-height:22px;writing-mode:vertical-rl;font-size:17px;font-weight:normal;-webkit-text-stroke:0.3px #4e4e54;color:#4e4e54;letter-spacing:1.1px">Libraries</div>
<div style="left:1887px;top:709px;width:28px;height:97px;background:#e4e3e7;border:1px solid #98969c;border-right:none"></div>
<div class="t" style="left:1890px;top:722px;width:22px;line-height:22px;writing-mode:vertical-rl;font-size:17px;font-weight:normal;-webkit-text-stroke:0.3px #4e4e54;color:#4e4e54;letter-spacing:1.2px">Add-ins</div>
<svg style="left:1889px;top:147px;" width="24" height="24" viewBox="0 0 24 24"><rect x="2" y="2" width="8" height="8" fill="#fff" stroke="#505058"/><rect x="13" y="2" width="8" height="8" fill="#fff" stroke="#505058"/><rect x="2" y="13" width="8" height="8" fill="#fff" stroke="#505058"/><rect x="13" y="13" width="8" height="8" fill="#fff" stroke="#505058"/><path d="M4 6h4M15 5h4M15 7h4M4 17h4M15 17h4" stroke="#303038"/></svg>
<svg style="left:1890px;top:322px;" width="22" height="22" viewBox="0 0 22 22"><rect x="1" y="1" width="19" height="20" fill="#f4f6ff" stroke="#8a98d0"/><path d="M5 3v7a3 3 0 0 0 6 0V3M8 13v3a3 3 0 0 0 4 3" stroke="#202850" stroke-width="1.6" fill="none"/><circle cx="13" cy="17" r="1.8" fill="#202850"/></svg>
<svg style="left:1889px;top:454px;" width="24" height="26" viewBox="0 0 24 26"><rect x="2" y="3" width="15" height="18" fill="#f8f8fc" stroke="#606878"/><path d="M5 8h9M5 11h9M5 14h9" stroke="#404858"/><path d="M9 16l4 5 9-11" stroke="#20a040" stroke-width="3" fill="none"/></svg>
<svg style="left:1889px;top:567px;" width="24" height="22" viewBox="0 0 24 22"><path d="M2 3c4-1 7 0 9 2v15c-2-2-5-3-9-2zM20 3c-4-1-7 0-9 2v15c2-2 5-3 9-2z" fill="#f4f6ff" stroke="#2040a0" stroke-width="1.8"/></svg>
<div style="left:380px;top:959px;width:1505px;height:35px;background:#b4b2b7"></div>
<div style="left:1345px;top:964px;width:155px;height:30px;background:linear-gradient(#eeedf1,#e2e1e5);border:1px solid #98969c;border-bottom:none"></div>
<div class="t" style="left:1376px;top:969.0px;line-height:20px;font-size:20px;color:#141418;-webkit-text-stroke:0.5px #141418;letter-spacing:0.1px">Properties</div>
<div style="left:1504px;top:964px;width:106px;height:30px;background:linear-gradient(#d8d7db,#cfced3);border:1px solid #98969c;border-bottom:none"></div>
<div class="t" style="left:1535px;top:969.0px;line-height:20px;font-size:20px;color:#58565c;-webkit-text-stroke:0.5px #58565c;letter-spacing:0.1px">Info</div>
<div style="left:1612px;top:964px;width:169px;height:30px;background:linear-gradient(#d8d7db,#cfced3);border:1px solid #98969c;border-bottom:none"></div>
<div class="t" style="left:1643px;top:969.0px;line-height:20px;font-size:20px;color:#58565c;-webkit-text-stroke:0.5px #58565c;letter-spacing:0.1px">Diagnostics</div>
<svg style="left:1350px;top:967px;" width="24" height="24" viewBox="0 0 24 24"><rect x="1" y="1" width="18" height="22" fill="#f4f6ff" stroke="#7080b0"/><circle cx="11" cy="11" r="6" fill="#fff" stroke="#303848" stroke-width="2.2"/><path d="M15 15l6 6" stroke="#303848" stroke-width="3"/></svg>
<svg style="left:1507px;top:967px;" width="26" height="24" viewBox="0 0 26 24"><rect x="3" y="4" width="16" height="18" fill="#f4f6ff" stroke="#7080b0"/><path d="M1 3h6M5 1l2 2-2 2" stroke="#101830" stroke-width="1.5" fill="none"/><text x="8" y="18" font-size="14" font-weight="bold" fill="#101830" font-family="Liberation Serif">i</text><path d="M12 21h10M20 18l3 3-3 3" stroke="#101830" stroke-width="1.8" fill="none"/></svg>
<svg style="left:1583px;top:968px;" width="22" height="22" viewBox="0 0 22 22"><circle cx="11" cy="11" r="10" fill="#f0d820" stroke="#b09000"/><text x="8" y="17" font-size="14" font-weight="bold" fill="#101010" font-family="Liberation Serif">i</text></svg>
<svg style="left:1617px;top:967px;" width="22" height="24" viewBox="0 0 22 24"><rect x="1" y="1" width="19" height="21" fill="#f4f6ff" stroke="#8a98d0"/><path d="M5 3v7a3 3 0 0 0 6 0V3M8 13v3a3 3 0 0 0 4 3" stroke="#202850" stroke-width="1.6" fill="none"/><circle cx="13" cy="17" r="1.8" fill="#202850"/></svg>
<div style="left:1815px;top:970px;width:11px;height:10px;background:#fbfbfd"></div>
<div style="left:1811px;top:974px;width:11px;height:10px;background:#fbfbfd;border:1px solid #b4b2b7"></div>
<div style="left:1836px;top:975px;width:15px;height:7px;border:2px solid #fbfbfd"></div>
<svg style="left:1857px;top:968px;" width="22" height="12" viewBox="0 0 22 12"><path d="M1 11L11 1l10 10z" fill="#fbfbfd"/></svg>
<div style="left:0px;top:993px;width:1920px;height:19px;background:#161618"></div>
<svg style="left:48px;top:1004px;" width="12" height="10" viewBox="0 0 12 10"><path d="M10 1L2 9l8 8z" fill="#f0f0f2"/></svg>
<div class="t" style="left:75px;top:1005.0px;line-height:20px;font-size:18px;color:#f4f4f6;font-weight:bold;letter-spacing:0.5px">Portal view</div>
<div style="left:254px;top:1000px;width:90px;height:12px;background:#c9c8cc"></div>
<div style="left:262px;top:1003px;width:20px;height:9px;background:#405080"></div>
<div class="t" style="left:288px;top:1005.0px;line-height:20px;font-size:17px;color:#202024;letter-spacing:0.5px">Ove...</div>
<div style="left:348px;top:1000px;width:90px;height:12px;background:#c9c8cc"></div>
<div style="left:356px;top:1003px;width:20px;height:9px;background:#20a030"></div>
<div class="t" style="left:382px;top:1005.0px;line-height:20px;font-size:17px;color:#202024;letter-spacing:0.5px">010 ...</div>
<div style="left:442px;top:1000px;width:90px;height:12px;background:#fbfbfd"></div>
<div style="left:450px;top:1003px;width:20px;height:9px;background:#20a030"></div>
<div class="t" style="left:476px;top:1005.0px;line-height:20px;font-size:17px;color:#202024;letter-spacing:0.5px">400 ...</div>
<div style="left:537px;top:1000px;width:89px;height:12px;background:#c9c8cc"></div>
<div style="left:545px;top:1003px;width:20px;height:9px;background:#20a030"></div>
<div class="t" style="left:571px;top:1005.0px;line-height:20px;font-size:17px;color:#202024;letter-spacing:0.5px">454 ...</div>
<div style="left:631px;top:1000px;width:90px;height:12px;background:#c9c8cc"></div>
<div style="left:639px;top:1003px;width:20px;height:9px;background:#8a20e8"></div>
<div class="t" style="left:665px;top:1005.0px;line-height:20px;font-size:17px;color:#202024;letter-spacing:0.5px">Mai...</div>
<div style="left:725px;top:1000px;width:90px;height:12px;background:#c9c8cc"></div>
<div style="left:733px;top:1003px;width:20px;height:9px;background:#8090e0"></div>
<div class="t" style="left:759px;top:1005.0px;line-height:20px;font-size:17px;color:#202024;letter-spacing:0.5px">100 ...</div>
<div style="left:819px;top:1000px;width:90px;height:12px;background:#c9c8cc"></div>
<div style="left:827px;top:1003px;width:20px;height:9px;background:#8090e0"></div>
<div class="t" style="left:853px;top:1005.0px;line-height:20px;font-size:17px;color:#202024;letter-spacing:0.5px">101 ...</div>
<div style="left:914px;top:1000px;width:90px;height:12px;background:#c9c8cc"></div>
<div style="left:922px;top:1003px;width:20px;height:9px;background:#20a030"></div>
<div class="t" style="left:948px;top:1005.0px;line-height:20px;font-size:17px;color:#202024;letter-spacing:0.5px">401 ...</div>
<div style="left:1008px;top:1000px;width:90px;height:12px;background:#c9c8cc"></div>
<div style="left:1016px;top:1003px;width:20px;height:9px;background:#a0b0e0"></div>
<div class="t" style="left:1042px;top:1005.0px;line-height:20px;font-size:17px;color:#202024;letter-spacing:0.5px">01 ...</div>
<div style="left:1102px;top:1000px;width:90px;height:12px;background:#c9c8cc"></div>
<div style="left:1110px;top:1003px;width:20px;height:9px;background:#a0b0e0"></div>
<div class="t" style="left:1136px;top:1005.0px;line-height:20px;font-size:17px;color:#202024;letter-spacing:0.5px">01.5 ...</div>
<div style="left:1197px;top:1000px;width:88px;height:12px;background:#c9c8cc"></div>
<div style="left:1205px;top:1003px;width:20px;height:9px;background:#a0b0e0"></div>
<div class="t" style="left:1231px;top:1005.0px;line-height:20px;font-size:17px;color:#202024;letter-spacing:0.5px">05.K...</div>
<div style="left:1290px;top:1000px;width:90px;height:12px;background:#c9c8cc"></div>
<div style="left:1298px;top:1003px;width:20px;height:9px;background:#20a030"></div>
<div class="t" style="left:1324px;top:1005.0px;line-height:20px;font-size:17px;color:#202024;letter-spacing:0.5px">010 ...</div>
<div style="left:1419px;top:1000px;width:29px;height:12px;background:#d8d8dc"></div>
<div style="left:1456px;top:996px;width:1px;height:16px;background:#606064"></div>
<svg style="left:1461px;top:1002px;" width="22" height="10" viewBox="0 0 22 10"><circle cx="11" cy="11" r="10" fill="#3040e0"/></svg>
<div class="t" style="left:1491px;top:1005.0px;line-height:20px;font-size:17px;color:#f0f0f2;letter-spacing:0.5px">Project PHE-Opr04 with buggy &amp; Alarms...</div>
<div style="left:380px;top:991px;width:1505px;height:2px;background:#d9d8dc"></div>
<svg style="left:830px;top:935px;" width="260" height="60" viewBox="0 0 260 60"><g fill="none" stroke="#c4c3c8" stroke-width="7" opacity="0.45" stroke-linecap="square"><path d="M19 20v22a10 10 0 0 0 10 10h36a8 8 0 0 0 8-8V8"/><path d="M77 8v36h110"/><path d="M114 26v18M133 26v18"/><path d="M164 8v42M164 24h14a10 10 0 0 1 10 10v2a8 8 0 0 1-8 8h-16"/><path d="M210 26a22 22 0 0 1 30 18v6"/><path d="M206 44h34"/></g><g fill="#c4c3c8" opacity="0.45"><path d="M36 7l6 6-6 6-6-6z"/><path d="M51 7l6 6-6 6-6-6z"/><path d="M222 7l6 6-6 6-6-6z"/><rect x="176" y="6" width="14" height="8"/></g></svg>
</body></html>
